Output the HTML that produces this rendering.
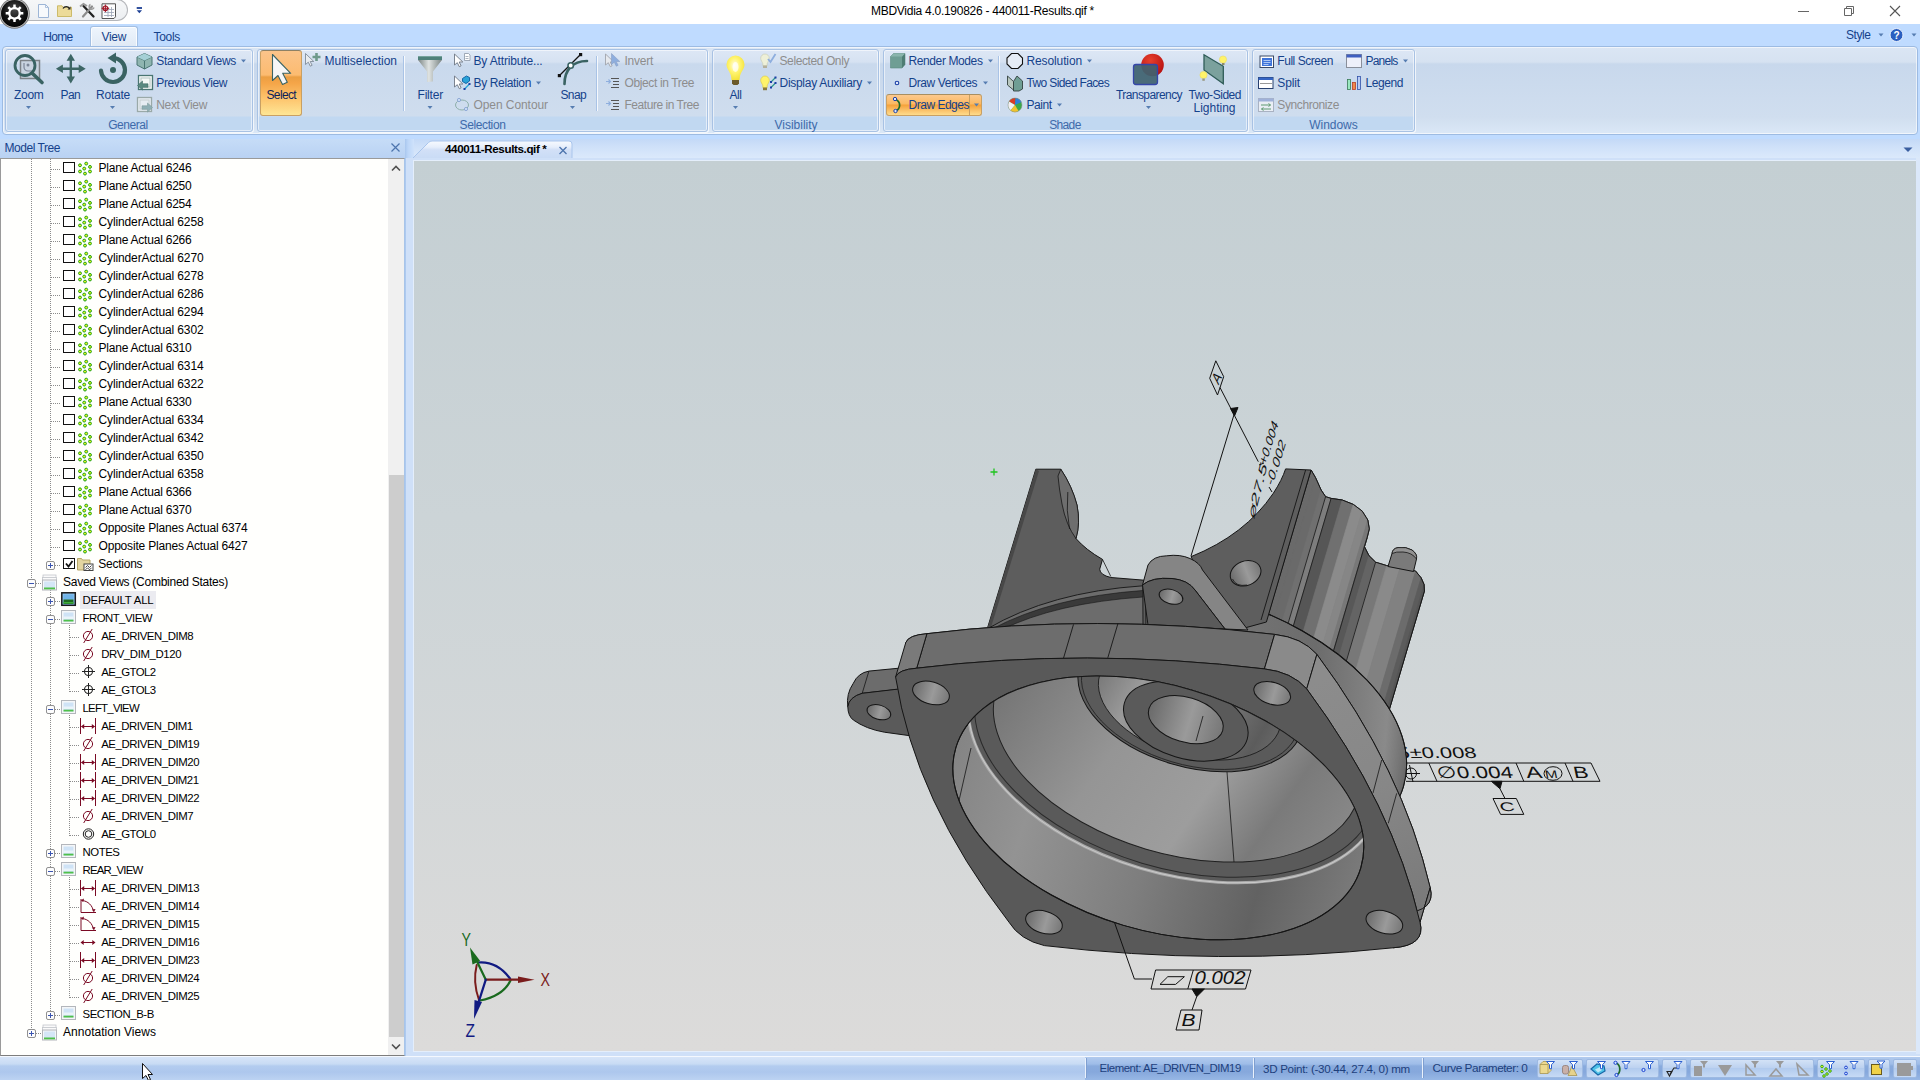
<!DOCTYPE html>
<html lang="en">
<head>
<meta charset="utf-8">
<title>MBDVidia 4.0.190826 - 440011-Results.qif *</title>
<style>
html,body{margin:0;padding:0;background:#fff;}
body{width:1920px;height:1080px;overflow:hidden;font-family:"Liberation Sans",sans-serif;font-size:12px;}
#app{position:relative;width:1920px;height:1080px;overflow:hidden;background:#bfdbff;}
.a{position:absolute;}
.t{position:absolute;white-space:nowrap;font-size:12px;line-height:15px;height:15px;color:#15428b;}
.dis{color:#8d8d8d;}
.blk{color:#000;}
svg{position:absolute;overflow:visible;}
.grp{position:absolute;top:49px;height:83px;border:1px solid #a8c2e4;border-radius:3px;box-sizing:border-box;
 background:linear-gradient(#dde7f5 0px,#d6e2f2 12px,#c9d9ed 14px,#cfddee 66px,#c1d8f1 67px,#c1d8f1 100%);box-shadow:0 0 0 1px rgba(255,255,255,.55) inset, 1px 1px 0 rgba(255,255,255,.7);}
.sep{position:absolute;width:1px;background:#a9c3e6;box-shadow:1px 0 0 rgba(255,255,255,.8);}
</style>
</head>
<body>
<div id="app">

<div class="a" style="left:0;top:0;width:1920px;height:24px;background:#fff"></div>
<div class="a" style="left:8px;top:-1px;width:119.5px;height:21.5px;border:1px solid #b4b6ba;border-left:none;border-radius:0 11px 11px 0;background:linear-gradient(#f6f7f8,#eceef1);box-sizing:border-box"></div>
<span class="t" style="left:871.0px;top:4.4px;letter-spacing:-0.271px;color:#000;">MBDVidia 4.0.190826 - 440011-Results.qif *</span>
<div class="a" style="left:0;top:24px;width:1920px;height:23px;background:#bfdbff"></div>
<div class="a" style="left:89.5px;top:26px;width:48px;height:21px;box-sizing:border-box;border:1px solid #a3bfe2;border-bottom:none;border-radius:3px 3px 0 0;background:linear-gradient(#eef5fd,#dfe9f5);box-shadow:0 0 0 1px rgba(255,255,255,.8) inset"></div>
<span class="t" style="left:43.3px;top:30.0px;letter-spacing:-0.702px;">Home</span>
<span class="t" style="left:101.5px;top:30.0px;letter-spacing:-0.323px;">View</span>
<span class="t" style="left:153.5px;top:30.0px;letter-spacing:-0.303px;">Tools</span>
<span class="t" style="left:1846.0px;top:28.4px;letter-spacing:-0.436px;">Style</span>
<div class="a" style="left:2px;top:46px;width:1916px;height:89px;box-sizing:border-box;border:1px solid #9dbbe2;border-radius:4px;background:linear-gradient(#dbe6f4 0,#d6e2f1 15px,#c8d8ec 17px,#d0deef 70px,#dbe8f7 100%);box-shadow:0 0 0 1px rgba(255,255,255,.6) inset"></div>
<div class="grp" style="left:5.0px;width:247.5px"></div>
<div class="grp" style="left:256.5px;width:451.0px"></div>
<div class="grp" style="left:711.5px;width:167.0px"></div>
<div class="grp" style="left:882.5px;width:365.0px"></div>
<div class="grp" style="left:1251.5px;width:163.0px"></div>
<span class="t" style="left:108.2px;top:118.4px;letter-spacing:-0.456px;color:#3e6aaa;">General</span>
<span class="t" style="left:459.5px;top:118.4px;letter-spacing:-0.374px;color:#3e6aaa;">Selection</span>
<span class="t" style="left:774.5px;top:118.4px;letter-spacing:-0.013px;color:#3e6aaa;">Visibility</span>
<span class="t" style="left:1049.2px;top:118.4px;letter-spacing:-0.640px;color:#3e6aaa;">Shade</span>
<span class="t" style="left:1309.2px;top:118.4px;letter-spacing:-0.026px;color:#3e6aaa;">Windows</span>
<div class="sep" style="left:403px;top:56px;height:55px"></div>
<div class="sep" style="left:596px;top:56px;height:55px"></div>
<div class="sep" style="left:998px;top:56px;height:55px"></div>
<div class="a" style="left:260px;top:50px;width:42px;height:66px;box-sizing:border-box;border:1px solid #c9a063;border-top-color:#8e8165;border-radius:3px;background:linear-gradient(#fbc48a 0,#fcbb70 24px,#eb9f43 26px,#f5a548 32px,#fdc56e 48px,#fee695 64px)"></div>
<div class="a" style="left:886px;top:94px;width:96px;height:22px;box-sizing:border-box;border:1px solid #c9a063;border-top-color:#a98f62;border-radius:3px;background:linear-gradient(#fcc98f 0,#fbb962 9px,#f5a13a 10px,#fbc56f 16px,#fedc8c 20px)"></div>
<div class="a" style="left:969px;top:95px;width:1px;height:20px;background:#c9a063"></div>
<span class="t" style="left:14.0px;top:88.4px;letter-spacing:-0.294px;">Zoom</span>
<span class="t" style="left:60.5px;top:88.4px;letter-spacing:-0.617px;">Pan</span>
<span class="t" style="left:96.0px;top:88.4px;letter-spacing:-0.226px;">Rotate</span>
<span class="t" style="left:156.3px;top:54.4px;letter-spacing:-0.295px;">Standard Views</span>
<span class="t" style="left:156.3px;top:76.4px;letter-spacing:-0.393px;">Previous View</span>
<span class="t" style="left:156.3px;top:98.4px;letter-spacing:-0.345px;color:#8d8d8d;">Next View</span>
<span class="t" style="left:266.5px;top:88.4px;letter-spacing:-0.642px;color:#0c1e5a;">Select</span>
<span class="t" style="left:324.5px;top:54.4px;letter-spacing:-0.014px;">Multiselection</span>
<span class="t" style="left:417.5px;top:88.4px;letter-spacing:-0.194px;">Filter</span>
<span class="t" style="left:473.5px;top:54.4px;letter-spacing:-0.158px;">By Attribute...</span>
<span class="t" style="left:473.5px;top:76.4px;letter-spacing:-0.351px;">By Relation</span>
<span class="t" style="left:473.5px;top:98.4px;letter-spacing:-0.073px;color:#8d8d8d;">Open Contour</span>
<span class="t" style="left:560.5px;top:88.4px;letter-spacing:-0.631px;">Snap</span>
<span class="t" style="left:624.5px;top:54.4px;letter-spacing:-0.252px;color:#8d8d8d;">Invert</span>
<span class="t" style="left:624.5px;top:76.4px;letter-spacing:-0.372px;color:#8d8d8d;">Object in Tree</span>
<span class="t" style="left:624.5px;top:98.4px;letter-spacing:-0.458px;color:#8d8d8d;">Feature in Tree</span>
<span class="t" style="left:729.5px;top:88.4px;letter-spacing:-0.445px;">All</span>
<span class="t" style="left:779.5px;top:54.4px;letter-spacing:-0.401px;color:#8d8d8d;">Selected Only</span>
<span class="t" style="left:779.5px;top:76.4px;letter-spacing:-0.286px;">Display Auxiliary</span>
<span class="t" style="left:908.5px;top:54.4px;letter-spacing:-0.392px;">Render Modes</span>
<span class="t" style="left:908.5px;top:76.4px;letter-spacing:-0.425px;">Draw Vertices</span>
<span class="t" style="left:908.5px;top:98.4px;letter-spacing:-0.486px;">Draw Edges</span>
<span class="t" style="left:1026.5px;top:54.4px;letter-spacing:-0.120px;">Resolution</span>
<span class="t" style="left:1026.5px;top:76.4px;letter-spacing:-0.636px;">Two Sided Faces</span>
<span class="t" style="left:1026.5px;top:98.4px;letter-spacing:-0.470px;">Paint</span>
<span class="t" style="left:1116.0px;top:88.4px;letter-spacing:-0.577px;">Transparency</span>
<span class="t" style="left:1188.5px;top:88.4px;letter-spacing:-0.466px;">Two-Sided</span>
<span class="t" style="left:1193.5px;top:101.4px;letter-spacing:-0.004px;">Lighting</span>
<span class="t" style="left:1277.3px;top:54.4px;letter-spacing:-0.454px;">Full Screen</span>
<span class="t" style="left:1277.3px;top:76.4px;letter-spacing:-0.129px;">Split</span>
<span class="t" style="left:1277.3px;top:98.4px;letter-spacing:-0.394px;color:#8d8d8d;">Synchronize</span>
<span class="t" style="left:1365.5px;top:54.4px;letter-spacing:-0.782px;">Panels</span>
<span class="t" style="left:1365.5px;top:76.4px;letter-spacing:-0.424px;">Legend</span>
<svg width="1920" height="140" viewBox="0 0 1920 140" style="left:0;top:0">
<!-- app button -->
<defs>
<radialGradient id="gApp" cx="50%" cy="35%" r="70%"><stop offset="0" stop-color="#4a4a4a"/><stop offset="0.6" stop-color="#111"/><stop offset="1" stop-color="#000"/></radialGradient>
<linearGradient id="gFun" x1="0" x2="1"><stop offset="0" stop-color="#7b8584"/><stop offset="0.45" stop-color="#dfe3e2"/><stop offset="1" stop-color="#7a8483"/></linearGradient>
<radialGradient id="gBulb" cx="45%" cy="40%" r="60%"><stop offset="0" stop-color="#fffde8"/><stop offset="0.5" stop-color="#fff471"/><stop offset="1" stop-color="#f4e23a"/></radialGradient>
<radialGradient id="gRed" cx="40%" cy="30%" r="70%"><stop offset="0" stop-color="#e8402c"/><stop offset="1" stop-color="#b81212"/></radialGradient>
</defs>
<circle cx="14.500" cy="13.500" r="15.300" fill="#7a7a7a"/>
<circle cx="14.500" cy="13.500" r="14.300" fill="#c9c9c9"/>
<circle cx="14.500" cy="13.500" r="13.500" fill="url(#gApp)"/>
<g transform="translate(14.500,13.300)" fill="#fff">
<path fill-rule="evenodd" d="M-1.30 -6.27 L-1.18 -8.82 L1.18 -8.82 L1.30 -6.27 L3.51 -5.35 L5.40 -7.08 L7.08 -5.40 L5.35 -3.51 L6.27 -1.30 L8.82 -1.18 L8.82 1.18 L6.27 1.30 L5.35 3.51 L7.08 5.40 L5.40 7.08 L3.51 5.35 L1.30 6.27 L1.18 8.82 L-1.18 8.82 L-1.30 6.27 L-3.51 5.35 L-5.40 7.08 L-7.08 5.40 L-5.35 3.51 L-6.27 1.30 L-8.82 1.18 L-8.82 -1.18 L-6.27 -1.30 L-5.35 -3.51 L-7.08 -5.40 L-5.40 -7.08 L-3.51 -5.35 Z M4.10 0 A4.10 4.10 0 1 0 -4.10 0 A4.10 4.10 0 1 0 4.10 0 Z"/>
</g>
<!-- quick access icons -->
<path d="M38.500 4.500h7l3 3v10h-10z" fill="#f7f9fc" stroke="#9db5d6"/><path d="M45.500 4.500v3h3" fill="none" stroke="#9db5d6" stroke-width=".8"/>
<path d="M57.500 5.800h4.500l1 1.500h8.500v9.200h-14z" fill="#ecdb9a" stroke="#c8b560" stroke-width=".9"/><path d="M63 8.500c1.500-2.500 5-2.500 6.500 0" fill="none" stroke="#222" stroke-width="1.200"/><path d="M70.500 6.500v3h-3z" fill="#222"/>
<path d="M93.500 16.500l-10-10.500" stroke="#222" stroke-width="2.300" stroke-linecap="round"/><path d="M83 16.500l9-10" stroke="#8c8c8c" stroke-width="2.200" stroke-linecap="round"/><path d="M80 6.500l3.500-2.500 3.500 2" stroke="#9a9a9a" stroke-width="2" fill="none"/><path d="M90.500 4.500a2.500 2.500 0 1 0 3.500 3" stroke="#9a9a9a" stroke-width="1.500" fill="none"/>
<path d="M102 3.800h13.500v13l-1.500 1.700h-12z" fill="#fdfdfd" stroke="#555" stroke-width="1"/><path d="M104 9.500h10M104 12.500h10M104 15.500h10M108 7v10M111.500 7v10" stroke="#9aa3b5" stroke-width=".8"/><circle cx="105.400" cy="8.300" r="2.300" fill="none" stroke="#a01525" stroke-width="1.200"/><path d="M105.400 4.500v7.600M101.600 8.300h7.600" stroke="#a01525" stroke-width="1"/>
<path d="M136.700 8h5.300" stroke="#1c3f94" stroke-width="1.800"/><path d="M136.700 10.300h5.300l-2.650 3z" fill="#1c3f94"/>
<!-- window controls -->
<path d="M1798 11.500h11" stroke="#666" stroke-width="1"/>
<path d="M1844.500 8.500h7v7h-7zM1846.500 8.500v-2h7v7h-2" fill="none" stroke="#666"/>
<path d="M1890 6l10 10M1900 6l-10 10" stroke="#555" stroke-width="1.100"/>
<!-- help -->
<circle cx="1896.500" cy="35" r="6.500" fill="#2b5fc0" stroke="#e8f0fb" stroke-width="1"/><text x="1896.500" y="39" font-size="10" font-weight="bold" fill="#fff" text-anchor="middle" font-family="Liberation Sans, sans-serif">?</text>
<!-- Zoom -->
<rect x="20.500" y="60.500" width="19" height="18" fill="#c9d3e0" stroke="#7d8287" stroke-width="1.500"/>
<path d="M24 63v4a4 4 0 0 0 4 4h5" fill="none" stroke="#7c8697" stroke-width="1.200"/><circle cx="28" cy="65" r="1.500" fill="#7c8697"/>
<circle cx="25" cy="65.500" r="10" fill="none" stroke="#3a6363" stroke-width="2.800"/>
<path d="M32.500 73.500l9.500 9" stroke="#3a6363" stroke-width="3.600" stroke-linecap="round"/>
<!-- Pan -->
<path d="M70.800 53.800l4.200 7h-3v6.700h6.700v-3l7 4.200-7 4.200v-3h-6.700v6.700h3l-4.200 7-4.200-7h3v-6.700h-6.700v3l-7-4.200 7-4.200v3h6.700v-6.700h-3z" fill="#3d6665"/>
<!-- Rotate -->
<path d="M101 70.500a12 12 0 1 0 12-12.500" fill="none" stroke="#3a6363" stroke-width="4.200" stroke-linecap="round"/>
<path d="M107.500 58l8.500-5.500v11z" fill="#3a6363"/>
<circle cx="113" cy="70" r="3" fill="#3a6363"/>
<!-- Standard Views cube -->
<path d="M144.500 53.500l7.500 3.500v8l-7.500 4-7.500-4v-8z" fill="#8fb5b0" stroke="#4a7572"/><path d="M137 57l7.500 3.500 7.500-3.500M144.500 60.500v8.500" fill="none" stroke="#4a7572"/><path d="M144.500 53.500l7.500 3.500-7.500 3.500-7.500-3.500z" fill="#a5d0d6"/>
<!-- Previous view -->
<rect x="138.500" y="75.500" width="14" height="14" fill="#f4f8f6" stroke="#4a7572" stroke-width="1.300"/><rect x="141" y="78" width="9" height="9" fill="none" stroke="#b5c5c3"/>
<path d="M137.500 85.500l5-4.500v2.800h5.500v3.500h-5.500v2.800z" fill="#5a8a80" stroke="#3f6b64" stroke-width=".6"/>
<!-- Next view -->
<rect x="137.500" y="97.500" width="14" height="14" fill="#e6edf2" stroke="#9aa9a8" stroke-width="1.300"/><rect x="140" y="100" width="9" height="9" fill="none" stroke="#c5d0d0"/>
<path d="M152.500 107.500l-5-4.500v2.800h-5.500v3.500h5.500v2.800z" fill="#8fb0b5" stroke="#7f9c9c" stroke-width=".6"/>
<!-- Select cursor -->
<path d="M272.500 54.500v26l5.500-5 4.500 9 4.800-2.200-4.600-9h8z" fill="#f6f6f6" stroke="#3a6363" stroke-width="1.100" stroke-linejoin="round"/>
<!-- Multiselection -->
<path d="M305.500 53.500v11l2.800-2.300 2 4 1.800-.9-1.900-3.800h3.600z" fill="#e8ecf0" stroke="#7f8b99" stroke-width=".9"/><path d="M316.500 53v8M312.500 57h8" stroke="#6f9a8c" stroke-width="2.600"/>
<!-- Filter funnel -->
<path d="M418 60h24l-9 11.500v10l-6 .5v-10.500z" fill="url(#gFun)"/><rect x="418" y="56" width="24" height="4" fill="#4f817b"/><path d="M418 56.500h24" stroke="#76a39d"/>
<!-- By attribute -->
<path d="M454.500 54v11l2.800-2.300 2 4 1.800-.9-1.900-3.800h3.600z" fill="#fff" stroke="#6d7683" stroke-width=".9"/><path d="M464.500 53.500h4l1.500 1.500v5.500h-5.500z" fill="#fff" stroke="#8a95a5" stroke-width=".8"/><path d="M465.500 56.500h3M465.500 58.500h3" stroke="#8a95a5" stroke-width=".7"/>
<!-- By relation -->
<path d="M454.500 76v11l2.800-2.300 2 4 1.800-.9-1.900-3.800h3.600z" fill="#fff" stroke="#6d7683" stroke-width=".9"/><path d="M462.500 78.500l4-2.500 3 1.500v3.500l-3.500 2.500-3.500-2z" fill="#2aa3d8" stroke="#1668a8"/><path d="M464.500 89l5-5" stroke="#2aa3d8" stroke-width="1.300"/><rect x="463.500" y="88" width="2" height="2" fill="#1b3fa6"/><rect x="468.500" y="83" width="2" height="2" fill="#1b3fa6"/>
<!-- Open contour -->
<ellipse cx="462" cy="105" rx="6.500" ry="5" fill="none" stroke="#8fb0ab" stroke-width="1"/><circle cx="459" cy="100" r="1.600" fill="#cfe0f5" stroke="#7f9ccf" stroke-width=".8"/><circle cx="466" cy="109" r="1.600" fill="#cfe0f5" stroke="#7f9ccf" stroke-width=".8"/>
<!-- Snap -->
<path d="M559.500 75.500l21-21" stroke="#111" stroke-width="1.300"/><rect x="557.800" y="74" width="3.200" height="3.200" fill="#111"/><rect x="579" y="53" width="3.200" height="3.200" fill="#111"/>
<path d="M564.500 84c0-14 8-23 22.500-23" fill="none" stroke="#3a6363" stroke-width="2.600" stroke-linecap="round"/><circle cx="570.700" cy="65.500" r="2.700" fill="#fff" stroke="#3a6363" stroke-width="1.600"/>
<!-- Invert -->
<path d="M605.500 54v11l2.800-2.300 2 4 1.800-.9-1.900-3.800h3.600z" fill="#e6e9ee" stroke="#a0a4ab" stroke-width=".9"/><path d="M611.500 53.500v11l2.800-2.300 2 4 1.800-.9-1.900-3.800h3.600z" fill="#8eaede" stroke="#8a9fc4" stroke-width=".6"/>
<!-- Object in tree / Feature in tree -->
<g><path d="M611 78.500h8M613 81.500h6M613 84.500h6M611 87.500h8" stroke="#555" stroke-width="1"/><path d="M606 81.500h4.500M608.500 79.500l2 2-2 2" stroke="#8eaede" stroke-width="1.100" fill="none"/></g>
<g transform="translate(0 22)"><path d="M611 78.500h8M613 81.500h6M613 84.500h6M611 87.500h8" stroke="#555" stroke-width="1"/><path d="M606 81.500h4.500M608.500 79.500l2 2-2 2" stroke="#8eaede" stroke-width="1.100" fill="none"/></g>
<!-- All bulb -->
<path d="M735.500 55.500a9 9 0 0 1 9 9c0 4.500-3.500 7-4.500 11.500l-.5 4h-8l-.5-4c-1-4.500-4.500-7-4.500-11.500a9 9 0 0 1 9-9z" fill="url(#gBulb)"/><path d="M732 80h7v3.500l-1.500 1.500h-4l-1.500-1.500z" fill="#6b5a2a"/><ellipse cx="735.500" cy="67" rx="3" ry="5" fill="#fff" opacity=".7"/>
<!-- Selected only -->
<path d="M765 54a4.300 4.300 0 0 1 4.300 4.300c0 2.200-1.600 3.400-2.100 5.500v2h-4.400v-2c-.5-2.100-2.100-3.300-2.100-5.500a4.300 4.300 0 0 1 4.300-4.300z" fill="#eef0d8" stroke="#c5c9b0" stroke-width=".6"/><rect x="763" y="65.500" width="4" height="2.500" fill="#b4b19c"/><path d="M768 59l2.500 3 5-8" fill="none" stroke="#8eaede" stroke-width="1.800"/>
<!-- Display auxiliary -->
<path d="M765 76a4.300 4.300 0 0 1 4.300 4.300c0 2.200-1.600 3.400-2.100 5.500v2h-4.400v-2c-.5-2.100-2.100-3.300-2.100-5.500a4.300 4.300 0 0 1 4.300-4.300z" fill="#fff36a" stroke="#d8c740" stroke-width=".6"/><rect x="763" y="87.500" width="4" height="2.700" fill="#8b7a3a"/><path d="M771 82l4.500-4.500M771 87.500l4.500-4.500" stroke="#2f9a8a" stroke-width="1.200"/><g fill="#1b3fa6"><rect x="770" y="81" width="2" height="2"/><rect x="774.500" y="76.500" width="2" height="2"/><rect x="770" y="86.500" width="2" height="2"/><rect x="774.500" y="82" width="2" height="2"/></g>
<!-- Render modes -->
<path d="M890.500 56.500l3-3h11.500v11l-3 3.500h-11.500z" fill="#6f9e94" stroke="#5d8a82" stroke-width=".6"/><path d="M902 56.500l3-3v11l-3 3.500z" fill="#4e7d74"/><path d="M890.500 56.500l3-3h11.500l-3 3z" fill="#8ab5ac"/>
<!-- Draw vertices -->
<circle cx="897" cy="83" r="1.800" fill="#dfe9fb" stroke="#1b3fa6" stroke-width="1.100"/>
<!-- Draw edges -->
<path d="M895.500 99.500c5.500 2 5.500 9.500 0 11.500" fill="none" stroke="#1e6a2a" stroke-width="1.700"/><circle cx="895" cy="99" r="1.700" fill="#dfe9fb" stroke="#1b3fa6" stroke-width="1"/><circle cx="895.500" cy="111" r="1.700" fill="#dfe9fb" stroke="#1b3fa6" stroke-width="1"/>
<!-- Resolution -->
<path d="M1011.500 53.500h6.500l4.500 4.500v6l-4.500 4.500h-6.500l-4.500-4.500v-6z" fill="#e6edf7" stroke="#111" stroke-width="1.100"/>
<!-- Two sided faces -->
<path d="M1007.500 76l6 5.500v8.500l-6-5z" fill="#b9c8c0" stroke="#33423f" stroke-width=".9"/><path d="M1013.500 81.500l3.500-5.500 5.500 5v8l-3.500 2h-5.500z" fill="#6f9e94" stroke="#33423f" stroke-width=".9"/>
<!-- Paint -->
<circle cx="1015" cy="105" r="7" fill="#3aa84a"/><path d="M1015 105l-6-3.500a7 7 0 0 1 6.500-3.500z" fill="#d93b25"/><path d="M1015 105l.5-7a7 7 0 0 1 6 4z" fill="#2f7fd8"/><path d="M1015 105l-6-3.500a7 7 0 0 0 1.500 9z" fill="#f2f2f2"/><path d="M1015 105l-4.500 5.500a7 7 0 0 0 8 .5z" fill="#f0c42c"/><circle cx="1015" cy="105" r="7" fill="none" stroke="#8a8a8a" stroke-width=".5"/>
<!-- Transparency -->
<circle cx="1152.500" cy="65" r="11.300" fill="url(#gRed)"/>
<rect x="1133.500" y="64.500" width="24" height="20" rx="2.500" fill="#3f6270" fill-opacity=".93" stroke="#3546a8" stroke-width="1.300"/>
<!-- Two sided lighting -->
<path d="M1204 54.800l19.300 11.500v17.500l-19.300-13.800z" fill="#7ba19d" stroke="#2f5c58" stroke-width="1.300"/>
<circle cx="1223" cy="59.500" r="3.600" fill="#fff36a" stroke="#e6d95a" stroke-width=".5"/><rect x="1222" y="63" width="2.500" height="2" fill="#8b8b6a"/>
<circle cx="1203.500" cy="75" r="3.600" fill="#fff36a" stroke="#e6d95a" stroke-width=".5"/><rect x="1202.300" y="78.500" width="2.500" height="2.300" fill="#9a9a86"/>
<!-- Full screen -->
<rect x="1260" y="56" width="13.500" height="11.500" fill="#fff" stroke="#3b4a66" stroke-width="1"/><rect x="1262" y="58" width="10" height="8" fill="#3f74d9"/><path d="M1263.500 60.500h7M1263.500 62.500h7M1263.500 64.500h5" stroke="#c9dcfb" stroke-width=".8"/>
<!-- Split -->
<rect x="1258.500" y="77.500" width="14.500" height="11" fill="#fff" stroke="#27406f" stroke-width="1"/><rect x="1258.500" y="77.500" width="14.500" height="2.500" fill="#3565c4"/><path d="M1260.500 83.500h11" stroke="#333" stroke-width="1" stroke-dasharray="1 1"/>
<!-- Synchronize -->
<rect x="1258.500" y="98.500" width="15" height="13" fill="#e9eef5" stroke="#a9b2c2" stroke-width="1"/><rect x="1258.500" y="98.500" width="15" height="3" fill="#9fb1d9"/><path d="M1261 105h9.500M1268.500 103.500l2 1.500-2 1.500M1271 109h-9.500M1263.500 107.500l-2 1.500 2 1.500" stroke="#5f9a72" stroke-width="1" fill="none"/>
<!-- Panels -->
<rect x="1346.500" y="54.500" width="15" height="13" fill="#eef0fa" stroke="#8a8f9a" stroke-width="1"/><rect x="1346.500" y="54.500" width="15" height="3" fill="#3f5fc0"/>
<!-- Legend -->
<rect x="1347.500" y="79.500" width="3" height="10" fill="#9ae8c0" stroke="#3a7a57" stroke-width=".8"/><rect x="1352.500" y="82.500" width="3" height="7" fill="#f08a4a" stroke="#b8402a" stroke-width=".8"/><rect x="1357.500" y="76.500" width="3" height="13" fill="#b9cbf4" stroke="#3050a8" stroke-width=".8"/>

<path d="M26.0 106.0 h5 l-2.5 3z" fill="#567db1"/>
<path d="M110.0 106.0 h5 l-2.5 3z" fill="#567db1"/>
<path d="M241.0 59.5 h5 l-2.5 3z" fill="#567db1"/>
<path d="M427.5 106.0 h5 l-2.5 3z" fill="#567db1"/>
<path d="M536.0 81.5 h5 l-2.5 3z" fill="#567db1"/>
<path d="M570.0 106.0 h5 l-2.5 3z" fill="#567db1"/>
<path d="M733.0 106.0 h5 l-2.5 3z" fill="#567db1"/>
<path d="M867.0 81.5 h5 l-2.5 3z" fill="#567db1"/>
<path d="M988.0 59.5 h5 l-2.5 3z" fill="#567db1"/>
<path d="M983.0 81.5 h5 l-2.5 3z" fill="#567db1"/>
<path d="M974.0 103.5 h5 l-2.5 3z" fill="#567db1"/>
<path d="M1087.0 59.5 h5 l-2.5 3z" fill="#567db1"/>
<path d="M1057.0 103.5 h5 l-2.5 3z" fill="#567db1"/>
<path d="M1146.0 106.0 h5 l-2.5 3z" fill="#567db1"/>
<path d="M1403.0 59.5 h5 l-2.5 3z" fill="#567db1"/>
<path d="M1878.5 33.5 h5 l-2.5 3z" fill="#567db1"/>
<path d="M1911.5 33.5 h5 l-2.5 3z" fill="#567db1"/>
</svg>
<div class="a" style="left:0;top:135px;width:1920px;height:4px;background:#bfdbff"></div>
<div class="a" style="left:0;top:139px;width:406px;height:19px;background:linear-gradient(#c6dcf7,#b9d2f3)"></div>
<span class="t" style="left:4.5px;top:141.1px;letter-spacing:-0.453px;color:#15428b;">Model Tree</span>
<div class="a" style="left:0;top:158px;width:405px;height:898px;background:#fffffd;border-top:1px solid #9a9a9a;border-left:1px solid #9a9a9a;border-bottom:1px solid #7d7d7d;border-right:1px solid #a8c4e8;box-sizing:border-box"></div>
<div class="a" style="left:388px;top:159px;width:16px;height:896px;background:#f0f0f0"></div>
<div class="a" style="left:389px;top:475px;width:15px;height:562px;background:#cdcdcd"></div>
<div class="a" style="left:405px;top:139px;width:9px;height:917px;background:linear-gradient(90deg,#a9c7ee 0,#bcd6f8 3px,#cfe2fb 9px)"></div>
<div class="a" style="left:80px;top:591px;width:76px;height:18px;background:#ebebf0"></div>
<svg width="420" height="1080" viewBox="0 0 420 1080" style="left:0;top:0">
<path d="M391.500 143.500l8 8M399.500 143.500l-8 8" stroke="#4d74ad" stroke-width="1.200"/>
<path d="M392 170.500l4-4 4 4" fill="none" stroke="#505050" stroke-width="1.600"/><path d="M392 1044.500l4 4 4-4" fill="none" stroke="#505050" stroke-width="1.600"/>
<path d="M31.5 159.0V1033.0" stroke="#8c8c8c" stroke-width="1" stroke-dasharray="1 1"/>
<path d="M50.5 159.0V565.0" stroke="#8c8c8c" stroke-width="1" stroke-dasharray="1 1"/>
<path d="M50.5 590.0V1015.0" stroke="#8c8c8c" stroke-width="1" stroke-dasharray="1 1"/>
<path d="M51.0 169.5H61.0" stroke="#8c8c8c" stroke-width="1" stroke-dasharray="1 1"/>
<rect x="63.500" y="162.5" width="11" height="10" fill="#fff" stroke="#111" stroke-width="1"/>
<circle cx="80.0" cy="165.3" r="1.45" fill="#f2f21a" stroke="#089a10" stroke-width=".9"/><circle cx="86.2" cy="163.6" r="1.45" fill="#f2f21a" stroke="#089a10" stroke-width=".9"/><circle cx="90.0" cy="166.9" r="1.45" fill="#f2f21a" stroke="#089a10" stroke-width=".9"/><circle cx="84.2" cy="168.6" r="1.45" fill="#f2f21a" stroke="#089a10" stroke-width=".9"/><circle cx="80.0" cy="171.5" r="1.45" fill="#f2f21a" stroke="#089a10" stroke-width=".9"/><circle cx="90.0" cy="171.5" r="1.45" fill="#f2f21a" stroke="#089a10" stroke-width=".9"/><circle cx="85.0" cy="173.6" r="1.45" fill="#f2f21a" stroke="#089a10" stroke-width=".9"/>
<path d="M51.0 187.5H61.0" stroke="#8c8c8c" stroke-width="1" stroke-dasharray="1 1"/>
<rect x="63.500" y="180.5" width="11" height="10" fill="#fff" stroke="#111" stroke-width="1"/>
<circle cx="80.0" cy="183.3" r="1.45" fill="#f2f21a" stroke="#089a10" stroke-width=".9"/><circle cx="86.2" cy="181.6" r="1.45" fill="#f2f21a" stroke="#089a10" stroke-width=".9"/><circle cx="90.0" cy="184.9" r="1.45" fill="#f2f21a" stroke="#089a10" stroke-width=".9"/><circle cx="84.2" cy="186.6" r="1.45" fill="#f2f21a" stroke="#089a10" stroke-width=".9"/><circle cx="80.0" cy="189.5" r="1.45" fill="#f2f21a" stroke="#089a10" stroke-width=".9"/><circle cx="90.0" cy="189.5" r="1.45" fill="#f2f21a" stroke="#089a10" stroke-width=".9"/><circle cx="85.0" cy="191.6" r="1.45" fill="#f2f21a" stroke="#089a10" stroke-width=".9"/>
<path d="M51.0 205.5H61.0" stroke="#8c8c8c" stroke-width="1" stroke-dasharray="1 1"/>
<rect x="63.500" y="198.5" width="11" height="10" fill="#fff" stroke="#111" stroke-width="1"/>
<circle cx="80.0" cy="201.3" r="1.45" fill="#f2f21a" stroke="#089a10" stroke-width=".9"/><circle cx="86.2" cy="199.6" r="1.45" fill="#f2f21a" stroke="#089a10" stroke-width=".9"/><circle cx="90.0" cy="202.9" r="1.45" fill="#f2f21a" stroke="#089a10" stroke-width=".9"/><circle cx="84.2" cy="204.6" r="1.45" fill="#f2f21a" stroke="#089a10" stroke-width=".9"/><circle cx="80.0" cy="207.5" r="1.45" fill="#f2f21a" stroke="#089a10" stroke-width=".9"/><circle cx="90.0" cy="207.5" r="1.45" fill="#f2f21a" stroke="#089a10" stroke-width=".9"/><circle cx="85.0" cy="209.6" r="1.45" fill="#f2f21a" stroke="#089a10" stroke-width=".9"/>
<path d="M51.0 223.5H61.0" stroke="#8c8c8c" stroke-width="1" stroke-dasharray="1 1"/>
<rect x="63.500" y="216.5" width="11" height="10" fill="#fff" stroke="#111" stroke-width="1"/>
<circle cx="80.0" cy="219.3" r="1.45" fill="#f2f21a" stroke="#089a10" stroke-width=".9"/><circle cx="86.2" cy="217.6" r="1.45" fill="#f2f21a" stroke="#089a10" stroke-width=".9"/><circle cx="90.0" cy="220.9" r="1.45" fill="#f2f21a" stroke="#089a10" stroke-width=".9"/><circle cx="84.2" cy="222.6" r="1.45" fill="#f2f21a" stroke="#089a10" stroke-width=".9"/><circle cx="80.0" cy="225.5" r="1.45" fill="#f2f21a" stroke="#089a10" stroke-width=".9"/><circle cx="90.0" cy="225.5" r="1.45" fill="#f2f21a" stroke="#089a10" stroke-width=".9"/><circle cx="85.0" cy="227.6" r="1.45" fill="#f2f21a" stroke="#089a10" stroke-width=".9"/>
<path d="M51.0 241.5H61.0" stroke="#8c8c8c" stroke-width="1" stroke-dasharray="1 1"/>
<rect x="63.500" y="234.5" width="11" height="10" fill="#fff" stroke="#111" stroke-width="1"/>
<circle cx="80.0" cy="237.3" r="1.45" fill="#f2f21a" stroke="#089a10" stroke-width=".9"/><circle cx="86.2" cy="235.6" r="1.45" fill="#f2f21a" stroke="#089a10" stroke-width=".9"/><circle cx="90.0" cy="238.9" r="1.45" fill="#f2f21a" stroke="#089a10" stroke-width=".9"/><circle cx="84.2" cy="240.6" r="1.45" fill="#f2f21a" stroke="#089a10" stroke-width=".9"/><circle cx="80.0" cy="243.5" r="1.45" fill="#f2f21a" stroke="#089a10" stroke-width=".9"/><circle cx="90.0" cy="243.5" r="1.45" fill="#f2f21a" stroke="#089a10" stroke-width=".9"/><circle cx="85.0" cy="245.6" r="1.45" fill="#f2f21a" stroke="#089a10" stroke-width=".9"/>
<path d="M51.0 259.5H61.0" stroke="#8c8c8c" stroke-width="1" stroke-dasharray="1 1"/>
<rect x="63.500" y="252.5" width="11" height="10" fill="#fff" stroke="#111" stroke-width="1"/>
<circle cx="80.0" cy="255.3" r="1.45" fill="#f2f21a" stroke="#089a10" stroke-width=".9"/><circle cx="86.2" cy="253.6" r="1.45" fill="#f2f21a" stroke="#089a10" stroke-width=".9"/><circle cx="90.0" cy="256.9" r="1.45" fill="#f2f21a" stroke="#089a10" stroke-width=".9"/><circle cx="84.2" cy="258.6" r="1.45" fill="#f2f21a" stroke="#089a10" stroke-width=".9"/><circle cx="80.0" cy="261.5" r="1.45" fill="#f2f21a" stroke="#089a10" stroke-width=".9"/><circle cx="90.0" cy="261.5" r="1.45" fill="#f2f21a" stroke="#089a10" stroke-width=".9"/><circle cx="85.0" cy="263.6" r="1.45" fill="#f2f21a" stroke="#089a10" stroke-width=".9"/>
<path d="M51.0 277.5H61.0" stroke="#8c8c8c" stroke-width="1" stroke-dasharray="1 1"/>
<rect x="63.500" y="270.5" width="11" height="10" fill="#fff" stroke="#111" stroke-width="1"/>
<circle cx="80.0" cy="273.3" r="1.45" fill="#f2f21a" stroke="#089a10" stroke-width=".9"/><circle cx="86.2" cy="271.6" r="1.45" fill="#f2f21a" stroke="#089a10" stroke-width=".9"/><circle cx="90.0" cy="274.9" r="1.45" fill="#f2f21a" stroke="#089a10" stroke-width=".9"/><circle cx="84.2" cy="276.6" r="1.45" fill="#f2f21a" stroke="#089a10" stroke-width=".9"/><circle cx="80.0" cy="279.5" r="1.45" fill="#f2f21a" stroke="#089a10" stroke-width=".9"/><circle cx="90.0" cy="279.5" r="1.45" fill="#f2f21a" stroke="#089a10" stroke-width=".9"/><circle cx="85.0" cy="281.6" r="1.45" fill="#f2f21a" stroke="#089a10" stroke-width=".9"/>
<path d="M51.0 295.5H61.0" stroke="#8c8c8c" stroke-width="1" stroke-dasharray="1 1"/>
<rect x="63.500" y="288.5" width="11" height="10" fill="#fff" stroke="#111" stroke-width="1"/>
<circle cx="80.0" cy="291.3" r="1.45" fill="#f2f21a" stroke="#089a10" stroke-width=".9"/><circle cx="86.2" cy="289.6" r="1.45" fill="#f2f21a" stroke="#089a10" stroke-width=".9"/><circle cx="90.0" cy="292.9" r="1.45" fill="#f2f21a" stroke="#089a10" stroke-width=".9"/><circle cx="84.2" cy="294.6" r="1.45" fill="#f2f21a" stroke="#089a10" stroke-width=".9"/><circle cx="80.0" cy="297.5" r="1.45" fill="#f2f21a" stroke="#089a10" stroke-width=".9"/><circle cx="90.0" cy="297.5" r="1.45" fill="#f2f21a" stroke="#089a10" stroke-width=".9"/><circle cx="85.0" cy="299.6" r="1.45" fill="#f2f21a" stroke="#089a10" stroke-width=".9"/>
<path d="M51.0 313.5H61.0" stroke="#8c8c8c" stroke-width="1" stroke-dasharray="1 1"/>
<rect x="63.500" y="306.5" width="11" height="10" fill="#fff" stroke="#111" stroke-width="1"/>
<circle cx="80.0" cy="309.3" r="1.45" fill="#f2f21a" stroke="#089a10" stroke-width=".9"/><circle cx="86.2" cy="307.6" r="1.45" fill="#f2f21a" stroke="#089a10" stroke-width=".9"/><circle cx="90.0" cy="310.9" r="1.45" fill="#f2f21a" stroke="#089a10" stroke-width=".9"/><circle cx="84.2" cy="312.6" r="1.45" fill="#f2f21a" stroke="#089a10" stroke-width=".9"/><circle cx="80.0" cy="315.5" r="1.45" fill="#f2f21a" stroke="#089a10" stroke-width=".9"/><circle cx="90.0" cy="315.5" r="1.45" fill="#f2f21a" stroke="#089a10" stroke-width=".9"/><circle cx="85.0" cy="317.6" r="1.45" fill="#f2f21a" stroke="#089a10" stroke-width=".9"/>
<path d="M51.0 331.5H61.0" stroke="#8c8c8c" stroke-width="1" stroke-dasharray="1 1"/>
<rect x="63.500" y="324.5" width="11" height="10" fill="#fff" stroke="#111" stroke-width="1"/>
<circle cx="80.0" cy="327.3" r="1.45" fill="#f2f21a" stroke="#089a10" stroke-width=".9"/><circle cx="86.2" cy="325.6" r="1.45" fill="#f2f21a" stroke="#089a10" stroke-width=".9"/><circle cx="90.0" cy="328.9" r="1.45" fill="#f2f21a" stroke="#089a10" stroke-width=".9"/><circle cx="84.2" cy="330.6" r="1.45" fill="#f2f21a" stroke="#089a10" stroke-width=".9"/><circle cx="80.0" cy="333.5" r="1.45" fill="#f2f21a" stroke="#089a10" stroke-width=".9"/><circle cx="90.0" cy="333.5" r="1.45" fill="#f2f21a" stroke="#089a10" stroke-width=".9"/><circle cx="85.0" cy="335.6" r="1.45" fill="#f2f21a" stroke="#089a10" stroke-width=".9"/>
<path d="M51.0 349.5H61.0" stroke="#8c8c8c" stroke-width="1" stroke-dasharray="1 1"/>
<rect x="63.500" y="342.5" width="11" height="10" fill="#fff" stroke="#111" stroke-width="1"/>
<circle cx="80.0" cy="345.3" r="1.45" fill="#f2f21a" stroke="#089a10" stroke-width=".9"/><circle cx="86.2" cy="343.6" r="1.45" fill="#f2f21a" stroke="#089a10" stroke-width=".9"/><circle cx="90.0" cy="346.9" r="1.45" fill="#f2f21a" stroke="#089a10" stroke-width=".9"/><circle cx="84.2" cy="348.6" r="1.45" fill="#f2f21a" stroke="#089a10" stroke-width=".9"/><circle cx="80.0" cy="351.5" r="1.45" fill="#f2f21a" stroke="#089a10" stroke-width=".9"/><circle cx="90.0" cy="351.5" r="1.45" fill="#f2f21a" stroke="#089a10" stroke-width=".9"/><circle cx="85.0" cy="353.6" r="1.45" fill="#f2f21a" stroke="#089a10" stroke-width=".9"/>
<path d="M51.0 367.5H61.0" stroke="#8c8c8c" stroke-width="1" stroke-dasharray="1 1"/>
<rect x="63.500" y="360.5" width="11" height="10" fill="#fff" stroke="#111" stroke-width="1"/>
<circle cx="80.0" cy="363.3" r="1.45" fill="#f2f21a" stroke="#089a10" stroke-width=".9"/><circle cx="86.2" cy="361.6" r="1.45" fill="#f2f21a" stroke="#089a10" stroke-width=".9"/><circle cx="90.0" cy="364.9" r="1.45" fill="#f2f21a" stroke="#089a10" stroke-width=".9"/><circle cx="84.2" cy="366.6" r="1.45" fill="#f2f21a" stroke="#089a10" stroke-width=".9"/><circle cx="80.0" cy="369.5" r="1.45" fill="#f2f21a" stroke="#089a10" stroke-width=".9"/><circle cx="90.0" cy="369.5" r="1.45" fill="#f2f21a" stroke="#089a10" stroke-width=".9"/><circle cx="85.0" cy="371.6" r="1.45" fill="#f2f21a" stroke="#089a10" stroke-width=".9"/>
<path d="M51.0 385.5H61.0" stroke="#8c8c8c" stroke-width="1" stroke-dasharray="1 1"/>
<rect x="63.500" y="378.5" width="11" height="10" fill="#fff" stroke="#111" stroke-width="1"/>
<circle cx="80.0" cy="381.3" r="1.45" fill="#f2f21a" stroke="#089a10" stroke-width=".9"/><circle cx="86.2" cy="379.6" r="1.45" fill="#f2f21a" stroke="#089a10" stroke-width=".9"/><circle cx="90.0" cy="382.9" r="1.45" fill="#f2f21a" stroke="#089a10" stroke-width=".9"/><circle cx="84.2" cy="384.6" r="1.45" fill="#f2f21a" stroke="#089a10" stroke-width=".9"/><circle cx="80.0" cy="387.5" r="1.45" fill="#f2f21a" stroke="#089a10" stroke-width=".9"/><circle cx="90.0" cy="387.5" r="1.45" fill="#f2f21a" stroke="#089a10" stroke-width=".9"/><circle cx="85.0" cy="389.6" r="1.45" fill="#f2f21a" stroke="#089a10" stroke-width=".9"/>
<path d="M51.0 403.5H61.0" stroke="#8c8c8c" stroke-width="1" stroke-dasharray="1 1"/>
<rect x="63.500" y="396.5" width="11" height="10" fill="#fff" stroke="#111" stroke-width="1"/>
<circle cx="80.0" cy="399.3" r="1.45" fill="#f2f21a" stroke="#089a10" stroke-width=".9"/><circle cx="86.2" cy="397.6" r="1.45" fill="#f2f21a" stroke="#089a10" stroke-width=".9"/><circle cx="90.0" cy="400.9" r="1.45" fill="#f2f21a" stroke="#089a10" stroke-width=".9"/><circle cx="84.2" cy="402.6" r="1.45" fill="#f2f21a" stroke="#089a10" stroke-width=".9"/><circle cx="80.0" cy="405.5" r="1.45" fill="#f2f21a" stroke="#089a10" stroke-width=".9"/><circle cx="90.0" cy="405.5" r="1.45" fill="#f2f21a" stroke="#089a10" stroke-width=".9"/><circle cx="85.0" cy="407.6" r="1.45" fill="#f2f21a" stroke="#089a10" stroke-width=".9"/>
<path d="M51.0 421.5H61.0" stroke="#8c8c8c" stroke-width="1" stroke-dasharray="1 1"/>
<rect x="63.500" y="414.5" width="11" height="10" fill="#fff" stroke="#111" stroke-width="1"/>
<circle cx="80.0" cy="417.3" r="1.45" fill="#f2f21a" stroke="#089a10" stroke-width=".9"/><circle cx="86.2" cy="415.6" r="1.45" fill="#f2f21a" stroke="#089a10" stroke-width=".9"/><circle cx="90.0" cy="418.9" r="1.45" fill="#f2f21a" stroke="#089a10" stroke-width=".9"/><circle cx="84.2" cy="420.6" r="1.45" fill="#f2f21a" stroke="#089a10" stroke-width=".9"/><circle cx="80.0" cy="423.5" r="1.45" fill="#f2f21a" stroke="#089a10" stroke-width=".9"/><circle cx="90.0" cy="423.5" r="1.45" fill="#f2f21a" stroke="#089a10" stroke-width=".9"/><circle cx="85.0" cy="425.6" r="1.45" fill="#f2f21a" stroke="#089a10" stroke-width=".9"/>
<path d="M51.0 439.5H61.0" stroke="#8c8c8c" stroke-width="1" stroke-dasharray="1 1"/>
<rect x="63.500" y="432.5" width="11" height="10" fill="#fff" stroke="#111" stroke-width="1"/>
<circle cx="80.0" cy="435.3" r="1.45" fill="#f2f21a" stroke="#089a10" stroke-width=".9"/><circle cx="86.2" cy="433.6" r="1.45" fill="#f2f21a" stroke="#089a10" stroke-width=".9"/><circle cx="90.0" cy="436.9" r="1.45" fill="#f2f21a" stroke="#089a10" stroke-width=".9"/><circle cx="84.2" cy="438.6" r="1.45" fill="#f2f21a" stroke="#089a10" stroke-width=".9"/><circle cx="80.0" cy="441.5" r="1.45" fill="#f2f21a" stroke="#089a10" stroke-width=".9"/><circle cx="90.0" cy="441.5" r="1.45" fill="#f2f21a" stroke="#089a10" stroke-width=".9"/><circle cx="85.0" cy="443.6" r="1.45" fill="#f2f21a" stroke="#089a10" stroke-width=".9"/>
<path d="M51.0 457.5H61.0" stroke="#8c8c8c" stroke-width="1" stroke-dasharray="1 1"/>
<rect x="63.500" y="450.5" width="11" height="10" fill="#fff" stroke="#111" stroke-width="1"/>
<circle cx="80.0" cy="453.3" r="1.45" fill="#f2f21a" stroke="#089a10" stroke-width=".9"/><circle cx="86.2" cy="451.6" r="1.45" fill="#f2f21a" stroke="#089a10" stroke-width=".9"/><circle cx="90.0" cy="454.9" r="1.45" fill="#f2f21a" stroke="#089a10" stroke-width=".9"/><circle cx="84.2" cy="456.6" r="1.45" fill="#f2f21a" stroke="#089a10" stroke-width=".9"/><circle cx="80.0" cy="459.5" r="1.45" fill="#f2f21a" stroke="#089a10" stroke-width=".9"/><circle cx="90.0" cy="459.5" r="1.45" fill="#f2f21a" stroke="#089a10" stroke-width=".9"/><circle cx="85.0" cy="461.6" r="1.45" fill="#f2f21a" stroke="#089a10" stroke-width=".9"/>
<path d="M51.0 475.5H61.0" stroke="#8c8c8c" stroke-width="1" stroke-dasharray="1 1"/>
<rect x="63.500" y="468.5" width="11" height="10" fill="#fff" stroke="#111" stroke-width="1"/>
<circle cx="80.0" cy="471.3" r="1.45" fill="#f2f21a" stroke="#089a10" stroke-width=".9"/><circle cx="86.2" cy="469.6" r="1.45" fill="#f2f21a" stroke="#089a10" stroke-width=".9"/><circle cx="90.0" cy="472.9" r="1.45" fill="#f2f21a" stroke="#089a10" stroke-width=".9"/><circle cx="84.2" cy="474.6" r="1.45" fill="#f2f21a" stroke="#089a10" stroke-width=".9"/><circle cx="80.0" cy="477.5" r="1.45" fill="#f2f21a" stroke="#089a10" stroke-width=".9"/><circle cx="90.0" cy="477.5" r="1.45" fill="#f2f21a" stroke="#089a10" stroke-width=".9"/><circle cx="85.0" cy="479.6" r="1.45" fill="#f2f21a" stroke="#089a10" stroke-width=".9"/>
<path d="M51.0 493.5H61.0" stroke="#8c8c8c" stroke-width="1" stroke-dasharray="1 1"/>
<rect x="63.500" y="486.5" width="11" height="10" fill="#fff" stroke="#111" stroke-width="1"/>
<circle cx="80.0" cy="489.3" r="1.45" fill="#f2f21a" stroke="#089a10" stroke-width=".9"/><circle cx="86.2" cy="487.6" r="1.45" fill="#f2f21a" stroke="#089a10" stroke-width=".9"/><circle cx="90.0" cy="490.9" r="1.45" fill="#f2f21a" stroke="#089a10" stroke-width=".9"/><circle cx="84.2" cy="492.6" r="1.45" fill="#f2f21a" stroke="#089a10" stroke-width=".9"/><circle cx="80.0" cy="495.5" r="1.45" fill="#f2f21a" stroke="#089a10" stroke-width=".9"/><circle cx="90.0" cy="495.5" r="1.45" fill="#f2f21a" stroke="#089a10" stroke-width=".9"/><circle cx="85.0" cy="497.6" r="1.45" fill="#f2f21a" stroke="#089a10" stroke-width=".9"/>
<path d="M51.0 511.5H61.0" stroke="#8c8c8c" stroke-width="1" stroke-dasharray="1 1"/>
<rect x="63.500" y="504.5" width="11" height="10" fill="#fff" stroke="#111" stroke-width="1"/>
<circle cx="80.0" cy="507.3" r="1.45" fill="#f2f21a" stroke="#089a10" stroke-width=".9"/><circle cx="86.2" cy="505.6" r="1.45" fill="#f2f21a" stroke="#089a10" stroke-width=".9"/><circle cx="90.0" cy="508.9" r="1.45" fill="#f2f21a" stroke="#089a10" stroke-width=".9"/><circle cx="84.2" cy="510.6" r="1.45" fill="#f2f21a" stroke="#089a10" stroke-width=".9"/><circle cx="80.0" cy="513.5" r="1.45" fill="#f2f21a" stroke="#089a10" stroke-width=".9"/><circle cx="90.0" cy="513.5" r="1.45" fill="#f2f21a" stroke="#089a10" stroke-width=".9"/><circle cx="85.0" cy="515.6" r="1.45" fill="#f2f21a" stroke="#089a10" stroke-width=".9"/>
<path d="M51.0 529.5H61.0" stroke="#8c8c8c" stroke-width="1" stroke-dasharray="1 1"/>
<rect x="63.500" y="522.5" width="11" height="10" fill="#fff" stroke="#111" stroke-width="1"/>
<circle cx="80.0" cy="525.3" r="1.45" fill="#f2f21a" stroke="#089a10" stroke-width=".9"/><circle cx="86.2" cy="523.6" r="1.45" fill="#f2f21a" stroke="#089a10" stroke-width=".9"/><circle cx="90.0" cy="526.9" r="1.45" fill="#f2f21a" stroke="#089a10" stroke-width=".9"/><circle cx="84.2" cy="528.6" r="1.45" fill="#f2f21a" stroke="#089a10" stroke-width=".9"/><circle cx="80.0" cy="531.5" r="1.45" fill="#f2f21a" stroke="#089a10" stroke-width=".9"/><circle cx="90.0" cy="531.5" r="1.45" fill="#f2f21a" stroke="#089a10" stroke-width=".9"/><circle cx="85.0" cy="533.6" r="1.45" fill="#f2f21a" stroke="#089a10" stroke-width=".9"/>
<path d="M51.0 547.5H61.0" stroke="#8c8c8c" stroke-width="1" stroke-dasharray="1 1"/>
<rect x="63.500" y="540.5" width="11" height="10" fill="#fff" stroke="#111" stroke-width="1"/>
<circle cx="80.0" cy="543.3" r="1.45" fill="#f2f21a" stroke="#089a10" stroke-width=".9"/><circle cx="86.2" cy="541.6" r="1.45" fill="#f2f21a" stroke="#089a10" stroke-width=".9"/><circle cx="90.0" cy="544.9" r="1.45" fill="#f2f21a" stroke="#089a10" stroke-width=".9"/><circle cx="84.2" cy="546.6" r="1.45" fill="#f2f21a" stroke="#089a10" stroke-width=".9"/><circle cx="80.0" cy="549.5" r="1.45" fill="#f2f21a" stroke="#089a10" stroke-width=".9"/><circle cx="90.0" cy="549.5" r="1.45" fill="#f2f21a" stroke="#089a10" stroke-width=".9"/><circle cx="85.0" cy="551.6" r="1.45" fill="#f2f21a" stroke="#089a10" stroke-width=".9"/>
<path d="M55.0 565.5H61.0" stroke="#8c8c8c" stroke-width="1" stroke-dasharray="1 1"/>
<rect x="46.5" y="561.5" width="8" height="8" rx="1.5" fill="#fdfdfd" stroke="#919191" stroke-width="1"/><path d="M48.0 565.5h5" stroke="#3b55b0" stroke-width="1"/><path d="M50.5 563.0v5" stroke="#3b55b0" stroke-width="1"/>
<rect x="63.500" y="558.5" width="11" height="10" fill="#fff" stroke="#111" stroke-width="1"/>
<path d="M66 563.5l2.500 3 4-5.500" fill="none" stroke="#111" stroke-width="1.800"/>
<path d="M77.500 558.5h4l1 1.500h7.500v10h-12.500z" fill="#e3d5a0" stroke="#b5a568" stroke-width="1"/>
<rect x="84" y="564.0" width="9" height="6.500" fill="#fff" stroke="#444" stroke-width="1"/><path d="M85.500 567.5l2-2 2 2 2-2M85.500 569.8l2-2 2 2 2-2" stroke="#333" stroke-width=".9" fill="none"/>
<path d="M36.0 583.5H42.0" stroke="#8c8c8c" stroke-width="1" stroke-dasharray="1 1"/>
<rect x="27.5" y="579.5" width="8" height="8" rx="1.5" fill="#fdfdfd" stroke="#919191" stroke-width="1"/><path d="M29.0 583.5h5" stroke="#3b55b0" stroke-width="1"/>
<rect x="43.0" y="575.0" width="13" height="3" fill="#fafafa" stroke="#c3c6cb" stroke-width=".8"/><rect x="42.5" y="577.5" width="14" height="3" fill="#fafafa" stroke="#c3c6cb" stroke-width=".8"/><rect x="42.5" y="580.0" width="14" height="10" fill="#f4f6f8" stroke="#b3b6bb" stroke-width="1"/><rect x="44.0" y="581.5" width="11" height="7" fill="#d5e6f7"/><rect x="44.0" y="587.5" width="11" height="1.800" fill="#4fc04a"/>
<path d="M55.0 601.5H60.0" stroke="#8c8c8c" stroke-width="1" stroke-dasharray="1 1"/>
<rect x="46.5" y="597.5" width="8" height="8" rx="1.5" fill="#fdfdfd" stroke="#919191" stroke-width="1"/><path d="M48.0 601.5h5" stroke="#3b55b0" stroke-width="1"/><path d="M50.5 599.0v5" stroke="#3b55b0" stroke-width="1"/>
<rect x="61.8" y="592.8" width="13.500" height="12.500" fill="#8ec4ee" stroke="#1a1a1a" stroke-width="1.500"/><rect x="63.5" y="594.5" width="10" height="5" fill="#6fb3e8"/><rect x="63.5" y="599.5" width="10" height="4.500" fill="#1f6a22"/><rect x="63.5" y="602.0" width="10" height="1.500" fill="#3fae3a"/>
<path d="M55.0 619.5H60.0" stroke="#8c8c8c" stroke-width="1" stroke-dasharray="1 1"/>
<rect x="46.5" y="615.5" width="8" height="8" rx="1.5" fill="#fdfdfd" stroke="#919191" stroke-width="1"/><path d="M48.0 619.5h5" stroke="#3b55b0" stroke-width="1"/>
<rect x="61.5" y="610.5" width="14" height="13" fill="#f4f6f8" stroke="#b3b6bb" stroke-width="1"/><rect x="63.5" y="612.5" width="10" height="9" fill="#cfe3f6"/><rect x="63.5" y="616.5" width="10" height="2.500" fill="#eaf3fa"/><rect x="63.5" y="619.7" width="10" height="1.800" fill="#4fc04a"/>
<path d="M70.0 637.5H80.0" stroke="#8c8c8c" stroke-width="1" stroke-dasharray="1 1"/>
<circle cx="88.0" cy="636.0" r="4.6" fill="none" stroke="#7a0a24" stroke-width="1"/><path d="M83.7 643.0l8.500-14" stroke="#7a0a24" stroke-width="1"/>
<path d="M70.0 655.5H80.0" stroke="#8c8c8c" stroke-width="1" stroke-dasharray="1 1"/>
<circle cx="88.0" cy="654.0" r="4.6" fill="none" stroke="#7a0a24" stroke-width="1"/><path d="M83.7 661.0l8.500-14" stroke="#7a0a24" stroke-width="1"/>
<path d="M70.0 673.5H80.0" stroke="#8c8c8c" stroke-width="1" stroke-dasharray="1 1"/>
<circle cx="88.5" cy="671.5" r="4" fill="none" stroke="#222" stroke-width="1.100"/><path d="M82.0 671.5h13M88.5 665.0v13" stroke="#222" stroke-width="1"/>
<path d="M70.0 691.5H80.0" stroke="#8c8c8c" stroke-width="1" stroke-dasharray="1 1"/>
<circle cx="88.5" cy="689.5" r="4" fill="none" stroke="#222" stroke-width="1.100"/><path d="M82.0 689.5h13M88.5 683.0v13" stroke="#222" stroke-width="1"/>
<path d="M55.0 709.5H60.0" stroke="#8c8c8c" stroke-width="1" stroke-dasharray="1 1"/>
<rect x="46.5" y="705.5" width="8" height="8" rx="1.5" fill="#fdfdfd" stroke="#919191" stroke-width="1"/><path d="M48.0 709.5h5" stroke="#3b55b0" stroke-width="1"/>
<rect x="61.5" y="700.5" width="14" height="13" fill="#f4f6f8" stroke="#b3b6bb" stroke-width="1"/><rect x="63.5" y="702.5" width="10" height="9" fill="#cfe3f6"/><rect x="63.5" y="706.5" width="10" height="2.500" fill="#eaf3fa"/><rect x="63.5" y="709.7" width="10" height="1.800" fill="#4fc04a"/>
<path d="M70.0 727.5H80.0" stroke="#8c8c8c" stroke-width="1" stroke-dasharray="1 1"/>
<path d="M80.5 718.0v16M95.5 718.0v16M81.5 726.5h13" stroke="#7a0a24" stroke-width="1" fill="none"/><path d="M81.0 726.5l3.200-2.500v5zM95.0 726.5l-3.200-2.500v5z" fill="#7a0a24"/>
<path d="M70.0 745.5H80.0" stroke="#8c8c8c" stroke-width="1" stroke-dasharray="1 1"/>
<circle cx="88.0" cy="744.0" r="4.6" fill="none" stroke="#7a0a24" stroke-width="1"/><path d="M83.7 751.0l8.500-14" stroke="#7a0a24" stroke-width="1"/>
<path d="M70.0 763.5H80.0" stroke="#8c8c8c" stroke-width="1" stroke-dasharray="1 1"/>
<path d="M80.5 754.0v16M95.5 754.0v16M81.5 762.5h13" stroke="#7a0a24" stroke-width="1" fill="none"/><path d="M81.0 762.5l3.200-2.500v5zM95.0 762.5l-3.200-2.500v5z" fill="#7a0a24"/>
<path d="M70.0 781.5H80.0" stroke="#8c8c8c" stroke-width="1" stroke-dasharray="1 1"/>
<path d="M80.5 772.0v16M95.5 772.0v16M81.5 780.5h13" stroke="#7a0a24" stroke-width="1" fill="none"/><path d="M81.0 780.5l3.200-2.500v5zM95.0 780.5l-3.200-2.500v5z" fill="#7a0a24"/>
<path d="M70.0 799.5H80.0" stroke="#8c8c8c" stroke-width="1" stroke-dasharray="1 1"/>
<path d="M80.5 790.0v16M95.5 790.0v16M81.5 798.5h13" stroke="#7a0a24" stroke-width="1" fill="none"/><path d="M81.0 798.5l3.200-2.500v5zM95.0 798.5l-3.200-2.500v5z" fill="#7a0a24"/>
<path d="M70.0 817.5H80.0" stroke="#8c8c8c" stroke-width="1" stroke-dasharray="1 1"/>
<circle cx="88.0" cy="816.0" r="4.6" fill="none" stroke="#7a0a24" stroke-width="1"/><path d="M83.7 823.0l8.500-14" stroke="#7a0a24" stroke-width="1"/>
<path d="M70.0 835.5H80.0" stroke="#8c8c8c" stroke-width="1" stroke-dasharray="1 1"/>
<circle cx="88.5" cy="834.0" r="5.2" fill="none" stroke="#222" stroke-width="1"/><circle cx="88.5" cy="834.0" r="3.300" fill="none" stroke="#222" stroke-width="1"/>
<path d="M55.0 853.5H60.0" stroke="#8c8c8c" stroke-width="1" stroke-dasharray="1 1"/>
<rect x="46.5" y="849.5" width="8" height="8" rx="1.5" fill="#fdfdfd" stroke="#919191" stroke-width="1"/><path d="M48.0 853.5h5" stroke="#3b55b0" stroke-width="1"/><path d="M50.5 851.0v5" stroke="#3b55b0" stroke-width="1"/>
<rect x="61.5" y="844.5" width="14" height="13" fill="#f4f6f8" stroke="#b3b6bb" stroke-width="1"/><rect x="63.5" y="846.5" width="10" height="9" fill="#cfe3f6"/><rect x="63.5" y="850.5" width="10" height="2.500" fill="#eaf3fa"/><rect x="63.5" y="853.7" width="10" height="1.800" fill="#4fc04a"/>
<path d="M55.0 871.5H60.0" stroke="#8c8c8c" stroke-width="1" stroke-dasharray="1 1"/>
<rect x="46.5" y="867.5" width="8" height="8" rx="1.5" fill="#fdfdfd" stroke="#919191" stroke-width="1"/><path d="M48.0 871.5h5" stroke="#3b55b0" stroke-width="1"/>
<rect x="61.5" y="862.5" width="14" height="13" fill="#f4f6f8" stroke="#b3b6bb" stroke-width="1"/><rect x="63.5" y="864.5" width="10" height="9" fill="#cfe3f6"/><rect x="63.5" y="868.5" width="10" height="2.500" fill="#eaf3fa"/><rect x="63.5" y="871.7" width="10" height="1.800" fill="#4fc04a"/>
<path d="M70.0 889.5H80.0" stroke="#8c8c8c" stroke-width="1" stroke-dasharray="1 1"/>
<path d="M80.5 880.0v16M95.5 880.0v16M81.5 888.5h13" stroke="#7a0a24" stroke-width="1" fill="none"/><path d="M81.0 888.5l3.200-2.500v5zM95.0 888.5l-3.200-2.500v5z" fill="#7a0a24"/>
<path d="M70.0 907.5H80.0" stroke="#8c8c8c" stroke-width="1" stroke-dasharray="1 1"/>
<path d="M81.0 899.0v13.500h15" stroke="#7a0a24" stroke-width="1" fill="none"/><path d="M82.0 900.5c6 .5 10.500 5 11.500 11" stroke="#7a0a24" stroke-width="1" fill="none"/><path d="M80.8 900.2l3.200-1.600-.8 3.400zM94.1 912.0l-2.200-2.400 3.600-.5z" fill="#7a0a24"/>
<path d="M70.0 925.5H80.0" stroke="#8c8c8c" stroke-width="1" stroke-dasharray="1 1"/>
<path d="M81.0 917.0v13.500h15" stroke="#7a0a24" stroke-width="1" fill="none"/><path d="M82.0 918.5c6 .5 10.500 5 11.500 11" stroke="#7a0a24" stroke-width="1" fill="none"/><path d="M80.8 918.2l3.200-1.600-.8 3.400zM94.1 930.0l-2.200-2.400 3.600-.5z" fill="#7a0a24"/>
<path d="M70.0 943.5H80.0" stroke="#8c8c8c" stroke-width="1" stroke-dasharray="1 1"/>
<path d="M82.0 942.5h12" stroke="#7a0a24" stroke-width="1" fill="none"/><path d="M80.5 942.5l3.200-2.500v5zM95.5 942.5l-3.200-2.500v5z" fill="#7a0a24"/>
<path d="M70.0 961.5H80.0" stroke="#8c8c8c" stroke-width="1" stroke-dasharray="1 1"/>
<path d="M80.5 952.0v16M95.5 952.0v16M81.5 960.5h13" stroke="#7a0a24" stroke-width="1" fill="none"/><path d="M81.0 960.5l3.200-2.500v5zM95.0 960.5l-3.200-2.500v5z" fill="#7a0a24"/>
<path d="M70.0 979.5H80.0" stroke="#8c8c8c" stroke-width="1" stroke-dasharray="1 1"/>
<circle cx="88.0" cy="978.0" r="4.6" fill="none" stroke="#7a0a24" stroke-width="1"/><path d="M83.7 985.0l8.500-14" stroke="#7a0a24" stroke-width="1"/>
<path d="M70.0 997.5H80.0" stroke="#8c8c8c" stroke-width="1" stroke-dasharray="1 1"/>
<circle cx="88.0" cy="996.0" r="4.6" fill="none" stroke="#7a0a24" stroke-width="1"/><path d="M83.7 1003.0l8.500-14" stroke="#7a0a24" stroke-width="1"/>
<path d="M55.0 1015.5H60.0" stroke="#8c8c8c" stroke-width="1" stroke-dasharray="1 1"/>
<rect x="46.5" y="1011.5" width="8" height="8" rx="1.5" fill="#fdfdfd" stroke="#919191" stroke-width="1"/><path d="M48.0 1015.5h5" stroke="#3b55b0" stroke-width="1"/><path d="M50.5 1013.0v5" stroke="#3b55b0" stroke-width="1"/>
<rect x="61.5" y="1006.5" width="14" height="13" fill="#f4f6f8" stroke="#b3b6bb" stroke-width="1"/><rect x="63.5" y="1008.5" width="10" height="9" fill="#cfe3f6"/><rect x="63.5" y="1012.5" width="10" height="2.500" fill="#eaf3fa"/><rect x="63.5" y="1015.7" width="10" height="1.800" fill="#4fc04a"/>
<path d="M36.0 1033.5H42.0" stroke="#8c8c8c" stroke-width="1" stroke-dasharray="1 1"/>
<rect x="27.5" y="1029.5" width="8" height="8" rx="1.5" fill="#fdfdfd" stroke="#919191" stroke-width="1"/><path d="M29.0 1033.5h5" stroke="#3b55b0" stroke-width="1"/><path d="M31.5 1031.0v5" stroke="#3b55b0" stroke-width="1"/>
<rect x="43.0" y="1025.0" width="13" height="3" fill="#fafafa" stroke="#c3c6cb" stroke-width=".8"/><rect x="42.5" y="1027.5" width="14" height="3" fill="#fafafa" stroke="#c3c6cb" stroke-width=".8"/><rect x="42.5" y="1030.0" width="14" height="10" fill="#f4f6f8" stroke="#b3b6bb" stroke-width="1"/><rect x="44.0" y="1031.5" width="11" height="7" fill="#d5e6f7"/><rect x="44.0" y="1037.5" width="11" height="1.800" fill="#4fc04a"/>
<path d="M69.5 625.0V692.0" stroke="#8c8c8c" stroke-width="1" stroke-dasharray="1 1"/>
<path d="M69.5 715.0V836.0" stroke="#8c8c8c" stroke-width="1" stroke-dasharray="1 1"/>
<path d="M69.5 877.0V998.0" stroke="#8c8c8c" stroke-width="1" stroke-dasharray="1 1"/>
</svg>
<span class="t" style="left:98.5px;top:161.0px;letter-spacing:-0.220px;color:#000;">Plane Actual 6246</span>
<span class="t" style="left:98.5px;top:179.0px;letter-spacing:-0.220px;color:#000;">Plane Actual 6250</span>
<span class="t" style="left:98.5px;top:197.0px;letter-spacing:-0.220px;color:#000;">Plane Actual 6254</span>
<span class="t" style="left:98.5px;top:215.0px;letter-spacing:-0.126px;color:#000;">CylinderActual 6258</span>
<span class="t" style="left:98.5px;top:233.0px;letter-spacing:-0.220px;color:#000;">Plane Actual 6266</span>
<span class="t" style="left:98.5px;top:251.0px;letter-spacing:-0.126px;color:#000;">CylinderActual 6270</span>
<span class="t" style="left:98.5px;top:269.0px;letter-spacing:-0.126px;color:#000;">CylinderActual 6278</span>
<span class="t" style="left:98.5px;top:287.0px;letter-spacing:-0.126px;color:#000;">CylinderActual 6286</span>
<span class="t" style="left:98.5px;top:305.0px;letter-spacing:-0.126px;color:#000;">CylinderActual 6294</span>
<span class="t" style="left:98.5px;top:323.0px;letter-spacing:-0.126px;color:#000;">CylinderActual 6302</span>
<span class="t" style="left:98.5px;top:341.0px;letter-spacing:-0.220px;color:#000;">Plane Actual 6310</span>
<span class="t" style="left:98.5px;top:359.0px;letter-spacing:-0.126px;color:#000;">CylinderActual 6314</span>
<span class="t" style="left:98.5px;top:377.0px;letter-spacing:-0.126px;color:#000;">CylinderActual 6322</span>
<span class="t" style="left:98.5px;top:395.0px;letter-spacing:-0.220px;color:#000;">Plane Actual 6330</span>
<span class="t" style="left:98.5px;top:413.0px;letter-spacing:-0.126px;color:#000;">CylinderActual 6334</span>
<span class="t" style="left:98.5px;top:431.0px;letter-spacing:-0.126px;color:#000;">CylinderActual 6342</span>
<span class="t" style="left:98.5px;top:449.0px;letter-spacing:-0.126px;color:#000;">CylinderActual 6350</span>
<span class="t" style="left:98.5px;top:467.0px;letter-spacing:-0.126px;color:#000;">CylinderActual 6358</span>
<span class="t" style="left:98.5px;top:485.0px;letter-spacing:-0.220px;color:#000;">Plane Actual 6366</span>
<span class="t" style="left:98.5px;top:503.0px;letter-spacing:-0.220px;color:#000;">Plane Actual 6370</span>
<span class="t" style="left:98.5px;top:521.0px;letter-spacing:-0.189px;color:#000;">Opposite Planes Actual 6374</span>
<span class="t" style="left:98.5px;top:539.0px;letter-spacing:-0.189px;color:#000;">Opposite Planes Actual 6427</span>
<span class="t" style="left:98.3px;top:557.0px;letter-spacing:-0.253px;color:#000;">Sections</span>
<span class="t" style="left:63.0px;top:575.0px;letter-spacing:-0.260px;color:#000;">Saved Views (Combined States)</span>
<span class="t" style="left:82.5px;top:592.5px;letter-spacing:-0.189px;color:#000;font-size:11.4px;">DEFAULT ALL</span>
<span class="t" style="left:82.5px;top:610.5px;letter-spacing:-0.523px;color:#000;font-size:11.4px;">FRONT_VIEW</span>
<span class="t" style="left:101.2px;top:628.5px;letter-spacing:-0.443px;color:#000;font-size:11.4px;">AE_DRIVEN_DIM8</span>
<span class="t" style="left:101.2px;top:646.5px;letter-spacing:-0.391px;color:#000;font-size:11.4px;">DRV_DIM_D120</span>
<span class="t" style="left:101.2px;top:664.5px;letter-spacing:-0.528px;color:#000;font-size:11.4px;">AE_GTOL2</span>
<span class="t" style="left:101.2px;top:682.5px;letter-spacing:-0.528px;color:#000;font-size:11.4px;">AE_GTOL3</span>
<span class="t" style="left:82.5px;top:700.5px;letter-spacing:-0.761px;color:#000;font-size:11.4px;">LEFT_VIEW</span>
<span class="t" style="left:101.2px;top:718.5px;letter-spacing:-0.478px;color:#000;font-size:11.4px;">AE_DRIVEN_DIM1</span>
<span class="t" style="left:101.2px;top:736.5px;letter-spacing:-0.436px;color:#000;font-size:11.4px;">AE_DRIVEN_DIM19</span>
<span class="t" style="left:101.2px;top:754.5px;letter-spacing:-0.436px;color:#000;font-size:11.4px;">AE_DRIVEN_DIM20</span>
<span class="t" style="left:101.2px;top:772.5px;letter-spacing:-0.469px;color:#000;font-size:11.4px;">AE_DRIVEN_DIM21</span>
<span class="t" style="left:101.2px;top:790.5px;letter-spacing:-0.436px;color:#000;font-size:11.4px;">AE_DRIVEN_DIM22</span>
<span class="t" style="left:101.2px;top:808.5px;letter-spacing:-0.443px;color:#000;font-size:11.4px;">AE_DRIVEN_DIM7</span>
<span class="t" style="left:101.2px;top:826.5px;letter-spacing:-0.528px;color:#000;font-size:11.4px;">AE_GTOL0</span>
<span class="t" style="left:82.5px;top:844.5px;letter-spacing:-0.454px;color:#000;font-size:11.4px;">NOTES</span>
<span class="t" style="left:82.5px;top:862.5px;letter-spacing:-0.794px;color:#000;font-size:11.4px;">REAR_VIEW</span>
<span class="t" style="left:101.2px;top:880.5px;letter-spacing:-0.436px;color:#000;font-size:11.4px;">AE_DRIVEN_DIM13</span>
<span class="t" style="left:101.2px;top:898.5px;letter-spacing:-0.436px;color:#000;font-size:11.4px;">AE_DRIVEN_DIM14</span>
<span class="t" style="left:101.2px;top:916.5px;letter-spacing:-0.436px;color:#000;font-size:11.4px;">AE_DRIVEN_DIM15</span>
<span class="t" style="left:101.2px;top:934.5px;letter-spacing:-0.436px;color:#000;font-size:11.4px;">AE_DRIVEN_DIM16</span>
<span class="t" style="left:101.2px;top:952.5px;letter-spacing:-0.436px;color:#000;font-size:11.4px;">AE_DRIVEN_DIM23</span>
<span class="t" style="left:101.2px;top:970.5px;letter-spacing:-0.436px;color:#000;font-size:11.4px;">AE_DRIVEN_DIM24</span>
<span class="t" style="left:101.2px;top:988.5px;letter-spacing:-0.436px;color:#000;font-size:11.4px;">AE_DRIVEN_DIM25</span>
<span class="t" style="left:82.5px;top:1006.5px;letter-spacing:-0.410px;color:#000;font-size:11.4px;">SECTION_B-B</span>
<span class="t" style="left:63.0px;top:1025.0px;letter-spacing:0.031px;color:#000;">Annotation Views</span>
<div class="a" style="left:414px;top:139px;width:1506px;height:22px;background:linear-gradient(#c3d9f7 0,#cfe1f9 8px,#dbe9fb 19px,#cfe0f8 20px)"></div>
<svg width="1920" height="170" viewBox="0 0 1920 170" style="left:0;top:0"><defs><linearGradient id="gTab" x1="0" y1="0" x2="0" y2="1"><stop offset="0" stop-color="#f7fafe"/><stop offset="0.35" stop-color="#e6eefb"/><stop offset="0.5" stop-color="#d2e0f7"/><stop offset="1" stop-color="#c9dbf5"/></linearGradient></defs><path d="M412.500 158.500L428.500 142.500q1.500-1.500 3.500-1.500H569q3 0 3 3V158.500z" fill="url(#gTab)" stroke="#a9c5ec" stroke-width="1"/><path d="M559.500 147l7 7M566.500 147l-7 7" stroke="#4d74ad" stroke-width="1.300"/><path d="M1903.500 147.500h9l-4.500 4.500z" fill="#3a5fa0"/></svg>
<span class="t" style="left:445.0px;top:141.1px;letter-spacing:-0.373px;color:#000;font-size:11.6px;font-weight:bold;">440011-Results.qif *</span>
<div class="a" style="left:406px;top:158px;width:1514px;height:898px;background:#cfe0f8"></div><div class="a" style="left:414px;top:161px;width:1502px;height:890px;background:linear-gradient(#c4cfd3 0,#ccd4d7 40%,#dcdbda 100%);box-shadow:0 0 0 1px #e4eefb"></div>
<div class="a" style="left:1916px;top:158px;width:4px;height:896px;background:#dbe8fa"></div>
<svg width="1920" height="1080" viewBox="0 0 1920 1080" style="left:0;top:0">
<defs>
<linearGradient id="gHole" x1="0" x2="1"><stop offset="0" stop-color="#6a6a6a"/><stop offset="0.55" stop-color="#9a9a9a"/><stop offset="1" stop-color="#777"/></linearGradient>
<linearGradient id="gWall" gradientUnits="userSpaceOnUse" x1="950" y1="0" x2="1370" y2="0"><stop offset="0" stop-color="#858585"/><stop offset="0.2" stop-color="#939393"/><stop offset="0.5" stop-color="#7e7e7e"/><stop offset="0.78" stop-color="#626262"/><stop offset="1" stop-color="#7a7a7a"/></linearGradient>
<linearGradient id="gFloor" gradientUnits="userSpaceOnUse" x1="1000" y1="700" x2="1360" y2="820"><stop offset="0" stop-color="#747474"/><stop offset="0.35" stop-color="#959595"/><stop offset="0.62" stop-color="#9d9d9d"/><stop offset="0.8" stop-color="#7a7a7a"/><stop offset="1" stop-color="#8a8a8a"/></linearGradient>
<linearGradient id="gBody" gradientUnits="userSpaceOnUse" x1="980" y1="0" x2="1420" y2="0"><stop offset="0" stop-color="#6a6a6a"/><stop offset="0.3" stop-color="#7c7c7c"/><stop offset="0.7" stop-color="#6c6c6c"/><stop offset="0.9" stop-color="#8a8a8a"/><stop offset="1" stop-color="#606060"/></linearGradient>
<linearGradient id="gFin1" gradientUnits="userSpaceOnUse" x1="1320" y1="560" x2="1375" y2="576"><stop offset="0" stop-color="#5c5c5c"/><stop offset="0.5" stop-color="#8e8e8e"/><stop offset="1" stop-color="#6a6a6a"/></linearGradient>
<linearGradient id="gFin2" gradientUnits="userSpaceOnUse" x1="1370" y1="620" x2="1425" y2="636"><stop offset="0" stop-color="#5a5a5a"/><stop offset="0.45" stop-color="#8c8c8c"/><stop offset="1" stop-color="#626262"/></linearGradient>
<linearGradient id="gRecess" gradientUnits="userSpaceOnUse" x1="1100" y1="690" x2="1290" y2="740"><stop offset="0" stop-color="#7a7a7a"/><stop offset="0.2" stop-color="#9a9a9a"/><stop offset="0.55" stop-color="#808080"/><stop offset="0.85" stop-color="#5c5c5c"/><stop offset="1" stop-color="#6e6e6e"/></linearGradient>
<linearGradient id="gSide" gradientUnits="userSpaceOnUse" x1="1320" y1="680" x2="1430" y2="900"><stop offset="0" stop-color="#8c8c8c"/><stop offset="0.5" stop-color="#878787"/><stop offset="1" stop-color="#7a7a7a"/></linearGradient>
<clipPath id="cE0"><ellipse cx="1158.3" cy="807.9" rx="211.2" ry="122.5" transform="rotate(16.5 1158.3 807.9)"/></clipPath>
</defs>
<g fill="none" stroke="#111" stroke-width="1">
<path d="M1403.800 763 H1591 L1600 781.300 H1406 M1428.800 763 L1437 781.300 M1516 763 L1523.800 781.300 M1565 763 L1573 781.300"/>
<circle cx="1411" cy="773.500" r="5.500"/><path d="M1402 773.500 h18 M1409.500 765 l3.500 17"/>
<ellipse cx="1553" cy="773.500" rx="9" ry="6.800"/>
<path d="M1491.300 781.300 h10.700 l-2 7.500 z" fill="#111"/>
<path d="M1500 788.800 L1505 798.500"/>
<path d="M1493 798.500 H1516.300 L1523.800 814.400 H1500.600 Z"/>
</g>
<g fill="#111" font-family="Liberation Sans, sans-serif">
<text transform="translate(1398.500 758.300) skewX(12)" font-size="15.500" textLength="79" lengthAdjust="spacingAndGlyphs">5±0.008</text>
<text transform="translate(1438 778) skewX(12)" font-size="16.500" textLength="76" lengthAdjust="spacingAndGlyphs">∅0.004</text>
<text transform="translate(1527 778) skewX(12)" font-size="16.500" textLength="16" lengthAdjust="spacingAndGlyphs">A</text>
<text transform="translate(1545.800 777.800) skewX(12)" font-size="11" textLength="12.500" lengthAdjust="spacingAndGlyphs">M</text>
<text transform="translate(1574.500 778) skewX(12)" font-size="16.500" textLength="15" lengthAdjust="spacingAndGlyphs">B</text>
<text transform="translate(1500.500 811) skewX(12)" font-size="12.500" textLength="15" lengthAdjust="spacingAndGlyphs">C</text>
</g>
<path d="M1311.1 470.0 L1315.6 477.8 L1321.1 490.0 L1325.6 496.7 L1331.1 498.4 L1342.2 500.0 L1353.3 504.4 L1362.2 511.1 L1367.8 520.0 L1369.3 528.9 L1367.1 537.8 L1364.4 546.7 L1368.9 555.6 L1375.6 562.2 L1386.7 565.6 L1400.0 567.8 L1415.6 571.1 L1421.1 577.8 L1424.0 584.4 L1424.4 591.1 L1379.8 741.7 L1379.4 735.0 L1376.5 728.4 L1371.0 721.7 L1355.4 718.4 L1342.1 716.2 L1331.0 712.8 L1324.3 706.2 L1319.8 697.3 L1322.5 688.4 L1324.7 679.5 L1323.2 670.6 L1317.6 661.7 L1308.7 655.0 L1297.6 650.6 L1286.5 649.0 L1281.0 647.3 L1276.5 640.6 L1271.0 628.4 L1266.5 620.6 Z" fill="#707070" stroke="#151515" stroke-width="1" stroke-linejoin="round" />
<path d="M1311.1 470.0 L1315.6 477.8 L1271.0 628.4 L1266.5 620.6 Z" fill="#6a6a6a" stroke="#6a6a6a" stroke-width="0.7" stroke-linejoin="round" />
<path d="M1315.6 477.8 L1321.1 490.0 L1276.5 640.6 L1271.0 628.4 Z" fill="#6a6a6a" stroke="#6a6a6a" stroke-width="0.7" stroke-linejoin="round" />
<path d="M1321.1 490.0 L1325.6 496.7 L1281.0 647.3 L1276.5 640.6 Z" fill="#707070" stroke="#707070" stroke-width="0.7" stroke-linejoin="round" />
<path d="M1325.6 496.7 L1331.1 498.4 L1286.5 649.0 L1281.0 647.3 Z" fill="#7d7d7d" stroke="#7d7d7d" stroke-width="0.7" stroke-linejoin="round" />
<path d="M1331.1 498.4 L1342.2 500.0 L1297.6 650.6 L1286.5 649.0 Z" fill="#565656" stroke="#565656" stroke-width="0.7" stroke-linejoin="round" />
<path d="M1342.2 500.0 L1353.3 504.4 L1308.7 655.0 L1297.6 650.6 Z" fill="#707070" stroke="#707070" stroke-width="0.7" stroke-linejoin="round" />
<path d="M1353.3 504.4 L1362.2 511.1 L1317.6 661.7 L1308.7 655.0 Z" fill="#8b8b8b" stroke="#8b8b8b" stroke-width="0.7" stroke-linejoin="round" />
<path d="M1362.2 511.1 L1367.8 520.0 L1323.2 670.6 L1317.6 661.7 Z" fill="#868686" stroke="#868686" stroke-width="0.7" stroke-linejoin="round" />
<path d="M1367.8 520.0 L1369.3 528.9 L1324.7 679.5 L1323.2 670.6 Z" fill="#787878" stroke="#787878" stroke-width="0.7" stroke-linejoin="round" />
<path d="M1369.3 528.9 L1367.1 537.8 L1322.5 688.4 L1324.7 679.5 Z" fill="#6c6c6c" stroke="#6c6c6c" stroke-width="0.7" stroke-linejoin="round" />
<path d="M1367.1 537.8 L1364.4 546.7 L1319.8 697.3 L1322.5 688.4 Z" fill="#606060" stroke="#606060" stroke-width="0.7" stroke-linejoin="round" />
<path d="M1364.4 546.7 L1368.9 555.6 L1324.3 706.2 L1319.8 697.3 Z" fill="#585858" stroke="#585858" stroke-width="0.7" stroke-linejoin="round" />
<path d="M1368.9 555.6 L1375.6 562.2 L1331.0 712.8 L1324.3 706.2 Z" fill="#646464" stroke="#646464" stroke-width="0.7" stroke-linejoin="round" />
<path d="M1375.6 562.2 L1386.7 565.6 L1342.1 716.2 L1331.0 712.8 Z" fill="#787878" stroke="#787878" stroke-width="0.7" stroke-linejoin="round" />
<path d="M1386.7 565.6 L1400.0 567.8 L1355.4 718.4 L1342.1 716.2 Z" fill="#8a8a8a" stroke="#8a8a8a" stroke-width="0.7" stroke-linejoin="round" />
<path d="M1400.0 567.8 L1415.6 571.1 L1371.0 721.7 L1355.4 718.4 Z" fill="#818181" stroke="#818181" stroke-width="0.7" stroke-linejoin="round" />
<path d="M1415.6 571.1 L1421.1 577.8 L1376.5 728.4 L1371.0 721.7 Z" fill="#6c6c6c" stroke="#6c6c6c" stroke-width="0.7" stroke-linejoin="round" />
<path d="M1421.1 577.8 L1424.0 584.4 L1379.4 735.0 L1376.5 728.4 Z" fill="#5c5c5c" stroke="#5c5c5c" stroke-width="0.7" stroke-linejoin="round" />
<path d="M1424.0 584.4 L1424.4 591.1 L1379.8 741.7 L1379.4 735.0 Z" fill="#555" stroke="#555" stroke-width="0.7" stroke-linejoin="round" />
<path d="M1311.1 470.0 L1266.5 620.6" fill="none" stroke="#151515" stroke-width="0.8" stroke-linejoin="round" />
<path d="M1325.6 496.7 L1281.0 647.3" fill="none" stroke="#151515" stroke-width="0.8" stroke-linejoin="round" />
<path d="M1331.1 498.4 L1286.5 649.0" fill="none" stroke="#151515" stroke-width="0.8" stroke-linejoin="round" />
<path d="M1364.4 546.7 L1319.8 697.3" fill="none" stroke="#151515" stroke-width="0.8" stroke-linejoin="round" />
<path d="M1375.6 562.2 L1331.0 712.8" fill="none" stroke="#151515" stroke-width="0.8" stroke-linejoin="round" />
<path d="M1311.1 470.0 L1315.6 477.8 L1321.1 490.0 L1325.6 496.7 L1331.1 498.4 L1342.2 500.0 L1353.3 504.4 L1362.2 511.1 L1367.8 520.0 L1369.3 528.9 L1367.1 537.8 L1364.4 546.7 L1368.9 555.6 L1375.6 562.2 L1386.7 565.6 L1400.0 567.8 L1415.6 571.1 L1421.1 577.8 L1424.0 584.4 L1424.4 591.1 L1379.8 741.7" fill="none" stroke="#151515" stroke-width="1" stroke-linejoin="round" />
<path d="M1392 553.5 Q1392.500 548.500 1398 547.600 Q1406 546.500 1412 550 Q1417.500 554 1416.500 559 L1413.5 571.5 L1388 566.5 Z" fill="#7a7a7a" stroke="#151515" stroke-width="1" stroke-linejoin="round" />
<path d="M1392 553.5 Q1392.500 548.500 1398 547.600 Q1406 546.500 1412 550 Q1417.500 554 1416.500 559 Q1412 552.500 1403 552 Q1396 551.500 1392 553.500 Z" fill="#929292" stroke="#151515" stroke-width="0.8" stroke-linejoin="round" />
<ellipse cx="1189.7" cy="722.9" rx="223.0" ry="129.3" transform="rotate(16.5 1189.7 722.9)" fill="url(#gBody)" stroke="#151515" stroke-width="1" />
<ellipse cx="1188.9" cy="725.2" rx="223.0" ry="129.3" transform="rotate(16.5 1188.9 725.2)" fill="url(#gBody)" stroke="none" stroke-width="1" />
<ellipse cx="1187.5" cy="728.9" rx="223.0" ry="129.3" transform="rotate(16.5 1187.5 728.9)" fill="url(#gBody)" stroke="none" stroke-width="1" />
<ellipse cx="1186.1" cy="732.7" rx="223.0" ry="129.3" transform="rotate(16.5 1186.1 732.7)" fill="url(#gBody)" stroke="none" stroke-width="1" />
<ellipse cx="1184.7" cy="736.5" rx="223.0" ry="129.3" transform="rotate(16.5 1184.7 736.5)" fill="url(#gBody)" stroke="none" stroke-width="1" />
<ellipse cx="1183.3" cy="740.2" rx="223.0" ry="129.3" transform="rotate(16.5 1183.3 740.2)" fill="url(#gBody)" stroke="none" stroke-width="1" />
<ellipse cx="1181.9" cy="744.0" rx="223.0" ry="129.3" transform="rotate(16.5 1181.9 744.0)" fill="url(#gBody)" stroke="none" stroke-width="1" />
<ellipse cx="1180.5" cy="747.7" rx="223.0" ry="129.3" transform="rotate(16.5 1180.5 747.7)" fill="url(#gBody)" stroke="none" stroke-width="1" />
<ellipse cx="1179.1" cy="751.5" rx="223.0" ry="129.3" transform="rotate(16.5 1179.1 751.5)" fill="url(#gBody)" stroke="none" stroke-width="1" />
<ellipse cx="1177.8" cy="755.3" rx="223.0" ry="129.3" transform="rotate(16.5 1177.8 755.3)" fill="url(#gBody)" stroke="none" stroke-width="1" />
<ellipse cx="1176.4" cy="759.0" rx="223.0" ry="129.3" transform="rotate(16.5 1176.4 759.0)" fill="url(#gBody)" stroke="none" stroke-width="1" />
<ellipse cx="1175.0" cy="762.8" rx="223.0" ry="129.3" transform="rotate(16.5 1175.0 762.8)" fill="url(#gBody)" stroke="none" stroke-width="1" />
<ellipse cx="1173.6" cy="766.5" rx="223.0" ry="129.3" transform="rotate(16.5 1173.6 766.5)" fill="url(#gBody)" stroke="none" stroke-width="1" />
<ellipse cx="1172.2" cy="770.3" rx="223.0" ry="129.3" transform="rotate(16.5 1172.2 770.3)" fill="url(#gBody)" stroke="none" stroke-width="1" />
<ellipse cx="1170.8" cy="774.1" rx="223.0" ry="129.3" transform="rotate(16.5 1170.8 774.1)" fill="url(#gBody)" stroke="none" stroke-width="1" />
<ellipse cx="1169.4" cy="777.8" rx="223.0" ry="129.3" transform="rotate(16.5 1169.4 777.8)" fill="url(#gBody)" stroke="none" stroke-width="1" />
<ellipse cx="1189.7" cy="722.9" rx="223.0" ry="129.3" transform="rotate(16.5 1189.7 722.9)" fill="none" stroke="#151515" stroke-width="1" />
<path d="M1035.8 469.2 L1060.8 469.2 Q1072 486 1077 505 Q1080.500 523 1076 538.600 Q1086 550 1102.500 559.400 L1099.7 569.2 Q1100 575 1110.800 577.500 L1145.500 580.300 L1146 626 L987.2 629 Z" fill="#5d5d5d" stroke="#151515" stroke-width="1" stroke-linejoin="round" />
<path d="M1060.8 469.2 Q1072 486 1077 505 Q1080.500 523 1076 538.600 Q1066 525 1062 504 Q1059 488 1058 476 Z" fill="#6e6e6e" stroke="#151515" stroke-width="0.8" stroke-linejoin="round" />
<path d="M1067.800 492 Q1066 510 1069.500 529" fill="none" stroke="#151515" stroke-width="0.8" stroke-linejoin="round" />
<path d="M1102.5 559.4 L1110.8 576.5" fill="none" stroke="#151515" stroke-width="0.8" stroke-linejoin="round" />
<path d="M1035.8 469.2 L987.2 628.9 L990.500 629 L1039 471 Z" fill="#484848" stroke="none" stroke-width="1" stroke-linejoin="round" />
<path d="M987.2 628.9 Q1050 592 1142.800 585.800 L1143 626 L987 632 Z" fill="#6c6c6c" stroke="#151515" stroke-width="0.9" stroke-linejoin="round" />
<path d="M992 629 Q1052 597 1142.800 590.500 L1142.8 597 Q1056 603 1001 630 Z" fill="#3a3a3a" stroke="#151515" stroke-width="0.6" stroke-linejoin="round" />
<path d="M1285.6 468.9 L1311 470 L1266.4 622 L1230 632 L1191 556.7 Q1245 535 1273.300 493.300 Q1282 480 1285.6 468.9 Z" fill="#5e5e5e" stroke="#151515" stroke-width="1" stroke-linejoin="round" />
<path d="M1305.6 470 L1261 620" fill="none" stroke="#151515" stroke-width="0.9" stroke-linejoin="round" />
<ellipse cx="1245.6" cy="573.3" rx="15.8" ry="12.2" transform="rotate(-22 1245.6 573.3)" fill="url(#gHole)" stroke="#151515" stroke-width="1"/>
<path d="M1232.500 579 Q1236 587 1247 585" fill="none" stroke="#151515" stroke-width="0.8" stroke-linejoin="round" />
<path d="M1148 565 Q1153 556 1166.700 555.800 Q1180 554 1190 558.500 Q1200 563 1202.500 570 L1248 630 L1225 629 L1195 590 Q1188 580 1172 578.500 Q1152 577 1142.500 585 Z" fill="#858585" stroke="#151515" stroke-width="1" stroke-linejoin="round" />
<path d="M1142.5 585 Q1152 577 1172 578.500 Q1188 580 1195 590 L1225 629 L1148 625 Z" fill="#5a5a5a" stroke="#151515" stroke-width="1" stroke-linejoin="round" />
<ellipse cx="1171.0" cy="596.7" rx="12.2" ry="7.1" transform="rotate(16.5 1171.0 596.7)" fill="url(#gHole)" stroke="#151515" stroke-width="1"/>
<path d="M853.3 683.3 Q858 673 868.900 671.100 L906 667.5 L902 688.9 L862.2 693.3 Q850 697 847.800 706.700 Q846 694 853.300 683.300 Z" fill="#6c6c6c" stroke="#151515" stroke-width="1" stroke-linejoin="round" />
<path d="M903 688.5 L862.2 693.3 Q849 697 847.800 706.700 Q848 716 853.300 720 Q866 729 884.400 732.200 L912 736 Z" fill="#5a5a5a" stroke="#151515" stroke-width="1" stroke-linejoin="round" />
<path d="M868.9 671.1 L862.2 693.3" fill="none" stroke="#151515" stroke-width="0.8" stroke-linejoin="round" />
<ellipse cx="878.9" cy="712.2" rx="12.2" ry="7.1" transform="rotate(16.5 878.9 712.2)" fill="url(#gHole)" stroke="#151515" stroke-width="1"/>
<path d="M905.8 642.5 Q908.7 635.0 926.9 633.7 Q1094.7 613.0 1274.6 634.4 Q1302.2 637.5 1316.9 654.4 Q1402.8 770.0 1430.2 887.7 Q1436.2 911.0 1403.2 913.3 Q1228.9 931.8 1054.6 911.1 Q1030.2 905.5 1019.2 887.7 Q924.9 765.9 905.8 642.5 Z" fill="#6b6b6b" stroke="#151515" stroke-width="1" stroke-linejoin="round" />
<path d="M916.7 668.2 Q1084.5 647.5 1264.4 668.9 L1274.6 634.4 Q1094.7 613.0 926.9 633.7 Z" fill="#6d6d6d" stroke="#151515" stroke-width="1" stroke-linejoin="round" />
<path d="M895.6 677.0 Q898.5 669.5 916.7 668.2 L926.9 633.7 Q908.7 635.0 905.8 642.5 Z" fill="#7a7a7a" stroke="#151515" stroke-width="1" stroke-linejoin="round" />
<path d="M1264.4 668.9 Q1292.0 672.0 1306.7 688.9 L1316.9 654.4 Q1302.2 637.5 1274.6 634.4 Z" fill="#8a8a8a" stroke="#151515" stroke-width="1" stroke-linejoin="round" />
<path d="M1306.7 688.9 Q1392.6 804.5 1420.0 922.2 L1430.2 887.7 Q1402.8 770.0 1316.9 654.4 Z" fill="url(#gSide)" stroke="#151515" stroke-width="1" stroke-linejoin="round" />
<path d="M1381.7 760 L1373 793 M1396.700 793.300 L1388.300 823.300" fill="none" stroke="#151515" stroke-width="0.8" stroke-linejoin="round" />
<path d="M1420.0 922.2 Q1426.0 945.5 1393.0 947.8 L1403.2 913.3 Q1436.2 911.0 1430.2 887.7 Z" fill="#787878" stroke="#151515" stroke-width="1" stroke-linejoin="round" />
<path d="M1063.3 658.9 L1073.5 624.4" fill="none" stroke="#151515" stroke-width="0.9" stroke-linejoin="round" />
<path d="M1107.8 657.8 L1118.0 623.3" fill="none" stroke="#151515" stroke-width="0.9" stroke-linejoin="round" />
<path d="M895.6 677.0 Q898.5 669.5 916.7 668.2 Q1084.5 647.5 1264.4 668.9 Q1292.0 672.0 1306.7 688.9 Q1392.6 804.5 1420.0 922.2 Q1426.0 945.5 1393.0 947.8 Q1218.7 966.3 1044.4 945.6 Q1020.0 940.0 1009.0 922.2 Q914.7 800.4 895.6 677.0 Z" fill="#595959" stroke="#151515" stroke-width="1" stroke-linejoin="round" />
<ellipse cx="1158.3" cy="807.9" rx="211.2" ry="122.5" transform="rotate(16.5 1158.3 807.9)" fill="url(#gWall)" stroke="#151515" stroke-width="1" />
<g clip-path="url(#cE0)">
<ellipse cx="1175.5" cy="749.8" rx="213.0" ry="123.5" transform="rotate(16.5 1175.5 749.8)" fill="#5a5a5a" stroke="#a9a9a9" stroke-width="3" />
<ellipse cx="1175.4" cy="750.2" rx="212.5" ry="123.2" transform="rotate(16.5 1175.4 750.2)" fill="none" stroke="#c9c9c9" stroke-width="1" />
<ellipse cx="1176.0" cy="748.0" rx="207.0" ry="120.1" transform="rotate(16.5 1176.0 748.0)" fill="none" stroke="#2a2a2a" stroke-width="1" />
<ellipse cx="1177.2" cy="744.1" rx="189.0" ry="109.6" transform="rotate(16.5 1177.2 744.1)" fill="url(#gFloor)" stroke="#202020" stroke-width="1" />
<ellipse cx="1190.4" cy="699.5" rx="115.6" ry="67.0" transform="rotate(16.5 1190.4 699.5)" fill="#5a5a5a" stroke="#151515" stroke-width="1" />
<ellipse cx="1190.4" cy="699.5" rx="112.0" ry="65.0" transform="rotate(16.5 1190.4 699.5)" fill="none" stroke="#222" stroke-width="0.8" />
<ellipse cx="1189.8" cy="701.5" rx="94.0" ry="54.5" transform="rotate(16.5 1189.8 701.5)" fill="url(#gRecess)" stroke="#222" stroke-width="0.9" />
<path d="M1227 772 L1234 862" fill="none" stroke="#151515" stroke-width="0.8" stroke-linejoin="round" />
<path d="M971 748 L958 805" fill="none" stroke="#151515" stroke-width="0.8" stroke-linejoin="round" />
</g>
<g clip-path="url(#cE0)">
<ellipse cx="1185.8" cy="721.1" rx="64.0" ry="37.1" transform="rotate(16.5 1185.8 721.1)" fill="#5a5a5a" stroke="#151515" stroke-width="1" />
<ellipse cx="1185.8" cy="719.7" rx="38.5" ry="22.3" transform="rotate(16.5 1185.8 719.7)" fill="url(#gHole)" stroke="#151515" stroke-width="1" />
<path d="M1203 716 L1196 741" fill="none" stroke="#151515" stroke-width="0.8" stroke-linejoin="round" />
</g>
<ellipse cx="1158.3" cy="807.9" rx="211.2" ry="122.5" transform="rotate(16.5 1158.3 807.9)" fill="none" stroke="#151515" stroke-width="1" />
<ellipse cx="931.0" cy="692.9" rx="18.9" ry="11.0" transform="rotate(16.5 931.0 692.9)" fill="url(#gHole)" stroke="#151515" stroke-width="1"/>
<ellipse cx="1272.2" cy="693.3" rx="18.9" ry="11.0" transform="rotate(16.5 1272.2 693.3)" fill="url(#gHole)" stroke="#151515" stroke-width="1"/>
<ellipse cx="1044.0" cy="922.2" rx="18.9" ry="11.0" transform="rotate(16.5 1044.0 922.2)" fill="url(#gHole)" stroke="#151515" stroke-width="1"/>
<ellipse cx="1384.4" cy="922.2" rx="18.9" ry="11.0" transform="rotate(16.5 1384.4 922.2)" fill="url(#gHole)" stroke="#151515" stroke-width="1"/>
<g fill="none" stroke="#111" stroke-width="1">
<path d="M1215.8 360.8 L1223.7 376.7 L1217.5 395 L1209.7 378.3 Z"/>
<path d="M1220 387.5 L1258.300 461.700"/>
<path d="M1234.500 413 L1191 556"/>
<path d="M1230.500 408.500 l7.500 -1 l-3.500 8.500 z" fill="#111"/>
<path d="M1259 465 l5 -2 M1269 487 l3 5"/>
<path d="M1114.400 922.200 L1134.400 979 L1152 979"/>
<path d="M1155.600 970 H1251 L1245.500 989 H1151 Z M1193.300 970 L1187.800 989"/>
<path d="M1160 984.400 L1167.800 976.700 H1184.400 L1175.600 984.400 Z"/>
<path d="M1192 989 h12.400 l-7.700 7.700 z" fill="#111"/>
<path d="M1196.700 996.700 L1192 1010"/>
<path d="M1181 1010 H1202 L1199 1030 H1176 Z"/>
</g>
<g fill="#111" font-family="Liberation Sans, sans-serif">
<text transform="translate(1254 520) rotate(-76) skewX(-14)" font-size="11" font-style="italic" textLength="56" lengthAdjust="spacingAndGlyphs">⌀27.5</text>
<text transform="translate(1265.500 466) rotate(-72.500) skewX(-14)" font-size="11" font-style="italic" textLength="44" lengthAdjust="spacingAndGlyphs">+0.004</text>
<text transform="translate(1272.500 486.500) rotate(-72.500) skewX(-14)" font-size="11" font-style="italic" textLength="46" lengthAdjust="spacingAndGlyphs">-0.002</text>
<text transform="translate(1218.800 385) rotate(-66) skewX(-12)" font-size="13.500" font-style="italic">A</text>
<text x="1194.500" y="984.300" font-size="17.500" font-style="italic" textLength="51" lengthAdjust="spacingAndGlyphs">0.002</text>
<text x="1181.500" y="1025.500" font-size="16.500" font-style="italic" textLength="14" lengthAdjust="spacingAndGlyphs">B</text>
</g>
<path d="M990.500 472 h7 M994 468.500 v7" stroke="#1fc41f" stroke-width="1.300" fill="none"/>
<g fill="none" stroke-linecap="round">
<path d="M478.300 962.500 Q497 961 510 978.500" stroke="#111a82" stroke-width="2.200"/>
<path d="M510.500 980.500 Q503 996 480 1000.500" stroke="#1a6a1e" stroke-width="2.200"/>
<path d="M476.700 965 Q472.500 982 479 1000" stroke="#7a1c1c" stroke-width="2"/>
<path d="M485.800 979.700 L520 979.700" stroke="#7a1c1c" stroke-width="2.200"/>
<path d="M485.800 979.700 L477.500 962.500" stroke="#1a6a1e" stroke-width="2.200"/>
<path d="M485.800 979.700 L479 1000.800" stroke="#111a82" stroke-width="2.200"/>
</g>
<path d="M518 976.500 L534.500 979.700 L518 983 Z" fill="#7a1c1c"/>
<path d="M470 947.500 L480.200 961 L472.500 964.500 Z" fill="#1a6a1e"/>
<path d="M474 1019 L474.500 1000 L482 1002 Z" fill="#111a82"/>
<g font-family="Liberation Sans, sans-serif" font-size="17.500">
<text x="540.500" y="986" fill="#7a1c1c" textLength="9.500" lengthAdjust="spacingAndGlyphs">X</text>
<text x="461.500" y="946" fill="#1a6a1e" textLength="9.500" lengthAdjust="spacingAndGlyphs">Y</text>
<text x="465.500" y="1036.800" fill="#111a82" textLength="9.500" lengthAdjust="spacingAndGlyphs">Z</text>
</g>
</svg>
<div class="a" style="left:0;top:1056px;width:1920px;height:1px;background:#f4f8fe"></div>
<div class="a" style="left:0;top:1057px;width:1920px;height:23px;background:linear-gradient(#d7e5f8 0,#c8dbf4 7px,#b3ccef 9px,#adc7ed 15px,#bcd3f2 23px)"></div>
<div class="a" style="left:1085px;top:1057px;width:835px;height:23px;background:linear-gradient(#b1caee 0,#9fbde8 7px,#89abdd 9px,#86a8dc 15px,#97b7e5 23px)"></div>
<div class="a" style="left:1085px;top:1058px;width:1px;height:20px;background:#e9f1fc;box-shadow:1px 0 0 #7f9fd0"></div>
<div class="a" style="left:1253px;top:1058px;width:1px;height:20px;background:#e9f1fc;box-shadow:1px 0 0 #7f9fd0"></div>
<div class="a" style="left:1422px;top:1058px;width:1px;height:20px;background:#e9f1fc;box-shadow:1px 0 0 #7f9fd0"></div>
<span class="t" style="left:1099.5px;top:1060.7px;letter-spacing:-0.440px;color:#1d3f7c;font-size:11.4px;">Element: AE_DRIVEN_DIM19</span>
<span class="t" style="left:1263.0px;top:1060.7px;letter-spacing:-0.301px;color:#1d3f7c;font-size:11.6px;">3D Point: (-30.44, 27.4, 0) mm</span>
<span class="t" style="left:1432.5px;top:1060.7px;letter-spacing:-0.442px;color:#1d3f7c;font-size:11.8px;">Curve Parameter: 0</span>
<div class="a" style="left:1537px;top:1059px;width:46px;height:19px;box-sizing:border-box;border:1px solid #9db9e2;border-radius:2px;background:linear-gradient(#d3e2f6,#bdd2f0 45%,#b2cbee 50%,#c6daf5)"></div>
<div class="a" style="left:1586px;top:1059px;width:73px;height:19px;box-sizing:border-box;border:1px solid #9db9e2;border-radius:2px;background:linear-gradient(#d3e2f6,#bdd2f0 45%,#b2cbee 50%,#c6daf5)"></div>
<div class="a" style="left:1662px;top:1059px;width:25px;height:19px;box-sizing:border-box;border:1px solid #9db9e2;border-radius:2px;background:linear-gradient(#d3e2f6,#bdd2f0 45%,#b2cbee 50%,#c6daf5)"></div>
<div class="a" style="left:1690px;top:1059px;width:124px;height:19px;box-sizing:border-box;border:1px solid #9db9e2;border-radius:2px;background:linear-gradient(#d3e2f6,#bdd2f0 45%,#b2cbee 50%,#c6daf5)"></div>
<div class="a" style="left:1817px;top:1059px;width:48px;height:19px;box-sizing:border-box;border:1px solid #9db9e2;border-radius:2px;background:linear-gradient(#d3e2f6,#bdd2f0 45%,#b2cbee 50%,#c6daf5)"></div>
<div class="a" style="left:1868px;top:1059px;width:22px;height:19px;box-sizing:border-box;border:1px solid #9db9e2;border-radius:2px;background:linear-gradient(#d3e2f6,#bdd2f0 45%,#b2cbee 50%,#c6daf5)"></div>
<div class="a" style="left:1893px;top:1059px;width:24px;height:19px;box-sizing:border-box;border:1px solid #9db9e2;border-radius:2px;background:linear-gradient(#d3e2f6,#bdd2f0 45%,#b2cbee 50%,#c6daf5)"></div>
<svg width="1920" height="1080" viewBox="0 0 1920 1080" style="left:0;top:0;pointer-events:none">
<path d="M142.500 1063.500v15l3.500-3 2.500 5 2-1-2.500-5h4.500z" fill="#fff" stroke="#111" stroke-width="1"/>
<path d="M1540 1064.500l3-3h8v9l-3 3h-8z" fill="#ecd98f" stroke="#a89550" stroke-width=".8"/><path d="M1540 1064.500h8v9M1548 1064.500l3-3" fill="none" stroke="#a89550" stroke-width=".8"/>
<path d="M1546.5 1061.5h8l-3 3.200v4h-2v-4z" fill="#fff" stroke="#2b5fd0" stroke-width="1"/>
<rect x="1562.500" y="1065.500" width="6" height="8.500" rx="2" fill="#c9b0a8" stroke="#8f7a72" stroke-width=".8"/><path d="M1572 1066l-4 9.500h9z" fill="#e5d28c" stroke="#a89550" stroke-width=".8"/>
<path d="M1569.5 1061.5h8l-3 3.200v4h-2v-4z" fill="#fff" stroke="#2b5fd0" stroke-width="1"/>
<path d="M1591 1069l6-5 7 2 1 5-7 4z" fill="#4fc3e8" stroke="#1668a8" stroke-width="1.200"/><path d="M1595 1069.500l5-2.500 2 3-4 2.500z" fill="#bfe9f7"/>
<path d="M1597.5 1061.5h8l-3 3.200v4h-2v-4z" fill="#fff" stroke="#2b5fd0" stroke-width="1"/>
<path d="M1616 1063c5 2 5 10 .5 12" fill="none" stroke="#1e6a2a" stroke-width="1.700"/><circle cx="1615.500" cy="1062.800" r="1.600" fill="#cfe6ff" stroke="#1b3fd0"/><circle cx="1616.500" cy="1075" r="1.600" fill="#cfe6ff" stroke="#1b3fd0"/>
<path d="M1622.0 1061.5h8l-3 3.200v4h-2v-4z" fill="#fff" stroke="#2b5fd0" stroke-width="1"/>
<circle cx="1643.500" cy="1070" r="1.600" fill="#cfe6ff" stroke="#1b3fd0"/>
<path d="M1645.5 1061.5h8l-3 3.200v4h-2v-4z" fill="#fff" stroke="#2b5fd0" stroke-width="1"/>
<path d="M1667 1071.500h5l-2.500 4.500zM1670 1074l4-6h3" fill="none" stroke="#222" stroke-width="1.100"/>
<path d="M1674.0 1061.5h8l-3 3.200v4h-2v-4z" fill="#fff" stroke="#2b5fd0" stroke-width="1"/>
<path d="M1694 1066h8v10h-8z" fill="#9a9a9a"/><path d="M1700 1061h8l-3 3.500v3h-2v-3z" fill="#9a9a9a"/>
<path d="M1718 1065h14l-7 11z" fill="#9a9a9a"/>
<path d="M1746 1065v10h9z" fill="none" stroke="#9a9a9a" stroke-width="1.500"/><path d="M1751 1061h8l-3 3.500v3h-2v-3z" fill="#9a9a9a"/>
<path d="M1770 1076l6-7 6 7z" fill="none" stroke="#9a9a9a" stroke-width="1.500"/><path d="M1776 1061h8l-3 3.500v3h-2v-3z" fill="#9a9a9a"/>
<path d="M1797 1064l2 11h9z" fill="none" stroke="#9a9a9a" stroke-width="1.500"/>
<circle cx="1822.0" cy="1066.5" r="1.300" fill="#f2f21a" stroke="#089a10" stroke-width=".8"/>
<circle cx="1826.0" cy="1069.0" r="1.300" fill="#f2f21a" stroke="#089a10" stroke-width=".8"/>
<circle cx="1822.0" cy="1071.5" r="1.300" fill="#f2f21a" stroke="#089a10" stroke-width=".8"/>
<circle cx="1827.0" cy="1074.0" r="1.300" fill="#f2f21a" stroke="#089a10" stroke-width=".8"/>
<circle cx="1830.0" cy="1071.0" r="1.300" fill="#f2f21a" stroke="#089a10" stroke-width=".8"/>
<circle cx="1824.0" cy="1076.0" r="1.300" fill="#f2f21a" stroke="#089a10" stroke-width=".8"/>
<path d="M1826.5 1061.5h8l-3 3.200v4h-2v-4z" fill="#fff" stroke="#2b5fd0" stroke-width="1"/>
<circle cx="1846" cy="1067.500" r="1.400" fill="#cfe6ff" stroke="#1b3fd0"/><circle cx="1846" cy="1073.500" r="1.400" fill="#cfe6ff" stroke="#1b3fd0"/>
<path d="M1850.0 1061.5h8l-3 3.200v4h-2v-4z" fill="#fff" stroke="#2b5fd0" stroke-width="1"/>
<rect x="1871.500" y="1064.500" width="10" height="10" fill="#f0d24a" stroke="#6a5a1a" stroke-width="1"/>
<path d="M1877.0 1061.0h8l-3 3.200v4h-2v-4z" fill="#fff" stroke="#2b5fd0" stroke-width="1"/>
<path d="M1897 1063h14v3h2v4h-2v6h-14z" fill="#9a9a9a"/>
</svg>
</div>
</body>
</html>
